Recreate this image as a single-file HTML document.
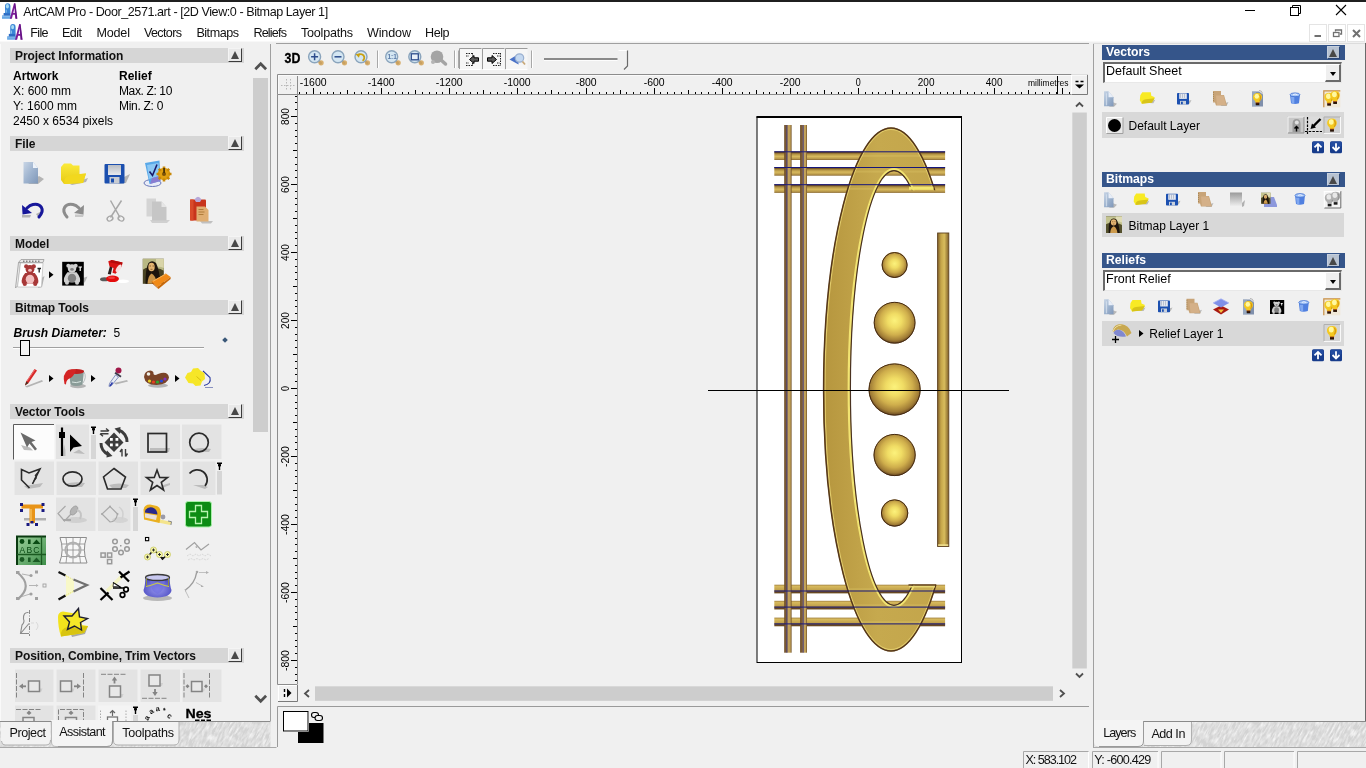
<!DOCTYPE html>
<html><head><meta charset="utf-8"><title>ArtCAM Pro</title>
<style>
*{box-sizing:border-box;margin:0;padding:0}
html,body{width:1366px;height:768px;overflow:hidden;background:#f0f0f0;font-family:"Liberation Sans",sans-serif;font-size:12px;color:#000}
.a{position:absolute}
.t{position:absolute;white-space:nowrap;line-height:1}
#titlebar{left:0;top:0;width:1366px;height:42px;background:#fff;border-bottom:1px solid #f8f8f8}
#topline{left:0;top:0;width:1366px;height:2px;background:#1f1f1f}
.menu{top:27px;font-size:12.6px;color:#111}
.hdr{position:absolute;left:10px;width:234px;height:15px;background:#d6d6d6}
.hdr b{position:absolute;left:5px;top:1.5px;font-size:12px;line-height:13px;letter-spacing:-0.1px;color:#111}
.cbtn{position:absolute;width:14px;height:14px;background:#e9e9e9;border-right:1.5px solid #3c3c3c;border-bottom:1.5px solid #3c3c3c;border-left:1px solid #f4f4f4;border-top:1px solid #f4f4f4}
.cbtn i{position:absolute;left:1.8px;top:2px;width:0;height:0;border-left:4px solid transparent;border-right:4px solid transparent;border-bottom:8px solid #484848}
.bh{position:absolute;left:1102px;width:243px;height:15px;background:#35558a}
.bh b{position:absolute;left:4px;top:1px;font-size:12.2px;line-height:13px;color:#fff}
.bh .cbtn{background:#b7c2d1;border-color:#c6d0de #2a4676 #2a4676 #c6d0de;border-width:1px}
.row{position:absolute;left:1102px;width:242px;height:25px;background:#d8d8d8}
.dd{position:absolute;left:1103px;width:239px;height:21px;background:#fff;border-top:2px solid #6a6a6a;border-left:2px solid #6a6a6a;border-right:1px solid #e8e8e8;border-bottom:1px solid #e8e8e8}
.ddb{position:absolute;right:0px;top:0px;width:16px;height:18px;background:#efefef;border-right:2px solid #6a6a6a;border-bottom:2px solid #6a6a6a;border-left:1px solid #fff;border-top:1px solid #fff}
.ddb i{position:absolute;left:4px;top:7px;width:0;height:0;border-left:3.5px solid transparent;border-right:3.5px solid transparent;border-top:4px solid #000}
#w{position:absolute;left:0;top:0;width:1366px;height:768px;will-change:transform;background:#f0f0f0}
#f1{letter-spacing:-0.449px}#f2{letter-spacing:-0.666px}#f3{letter-spacing:-0.568px}#f4{letter-spacing:-0.178px}#f5{letter-spacing:-0.667px}#f6{letter-spacing:-0.483px}#f7{letter-spacing:-0.817px}#f8{letter-spacing:-0.240px}#f9{letter-spacing:-0.159px}#f10{letter-spacing:-0.469px}#f11{letter-spacing:-0.376px}#f12{letter-spacing:-0.286px}#f13{letter-spacing:-0.451px}#f14{letter-spacing:-0.601px}#f15{letter-spacing:-0.278px}#f16{letter-spacing:-0.963px}#f17{letter-spacing:-0.484px}#f18{letter-spacing:-1.047px}#f19{letter-spacing:-0.742px}</style></head><body><div id="w">
<!-- TITLE + MENU -->
<div class="a" id="titlebar"></div>
<div class="a" id="topline"></div>
<div class="t" id="f1" style="left:23.2px;top:6.3px;font-size:12.6px;color:#111">ArtCAM Pro - Door_2571.art - [2D View:0 - Bitmap Layer 1]</div>
<div class="t menu" id="f2" style="left:30.3px">File</div>
<div class="t menu" id="f3" style="left:62px">Edit</div>
<div class="t menu" id="f4" style="left:96.4px">Model</div>
<div class="t menu" id="f5" style="left:144px">Vectors</div>
<div class="t menu" id="f6" style="left:196.4px">Bitmaps</div>
<div class="t menu" id="f7" style="left:253.4px">Reliefs</div>
<div class="t menu" id="f8" style="left:301px">Toolpaths</div>
<div class="t menu" id="f9" style="left:367px">Window</div>
<div class="t menu" id="f10" style="left:425px">Help</div>
<svg class="a" style="left:0;top:0" width="1366" height="44" viewBox="0 0 1366 44"><g transform="translate(2,3.2)"><rect x="0" y="12.3" width="9" height="3.2" fill="#3f8edc"/><path d="M0 13.3 h9 M0 14.7 h9" stroke="#9ccaf0" stroke-width="0.7"/><rect x="1.6" y="9.8" width="6.8" height="2.6" fill="#2c6cc4"/>
<path d="M3 10 V3 Q3 0 5.7 0 Q8.4 0 8.4 3 V10Z" fill="#3a86d6"/><ellipse cx="5.4" cy="3" rx="1.5" ry="2.2" fill="#a8dcf4"/><path d="M4.2 6.5 v3" stroke="#8cc4ec" stroke-width="1"/>
<path d="M7.8 15.6 L12 0 L13.4 0 L15.4 15.6 L13.2 15.6 L12.9 11.6 L10.9 11.6 L9.9 15.6Z" fill="#7a1c98"/><path d="M11.3 9.8 h1.5 l-0.3 -5.3Z" fill="#fff"/><path d="M12.7 0.5 L14.6 15.6" stroke="#5a0c78" stroke-width="0.8"/></g><g transform="translate(7.2,24.1)"><rect x="0" y="12.3" width="9" height="3.2" fill="#3f8edc"/><path d="M0 13.3 h9 M0 14.7 h9" stroke="#9ccaf0" stroke-width="0.7"/><rect x="1.6" y="9.8" width="6.8" height="2.6" fill="#2c6cc4"/>
<path d="M3 10 V3 Q3 0 5.7 0 Q8.4 0 8.4 3 V10Z" fill="#3a86d6"/><ellipse cx="5.4" cy="3" rx="1.5" ry="2.2" fill="#a8dcf4"/><path d="M4.2 6.5 v3" stroke="#8cc4ec" stroke-width="1"/>
<path d="M7.8 15.6 L12 0 L13.4 0 L15.4 15.6 L13.2 15.6 L12.9 11.6 L10.9 11.6 L9.9 15.6Z" fill="#7a1c98"/><path d="M11.3 9.8 h1.5 l-0.3 -5.3Z" fill="#fff"/><path d="M12.7 0.5 L14.6 15.6" stroke="#5a0c78" stroke-width="0.8"/></g><path d="M1245 10.5 H1255" stroke="#000" stroke-width="1"/><path d="M1292.5 7.5 V5.5 H1300.5 V13.5 H1298.5" fill="none" stroke="#000" stroke-width="1"/><rect x="1290.5" y="7.5" width="8" height="8" fill="#fff" stroke="#000" stroke-width="1"/><path d="M1336 5 L1346 15 M1346 5 L1336 15" stroke="#000" stroke-width="1.1"/><rect x="1309.5" y="24.5" width="17" height="17" fill="#fff" stroke="#e4e4e4" stroke-width="1"/><rect x="1328.5" y="24.5" width="17" height="17" fill="#fff" stroke="#e4e4e4" stroke-width="1"/><rect x="1347.5" y="24.5" width="17" height="17" fill="#fff" stroke="#e4e4e4" stroke-width="1"/><path d="M1314.5 36 H1321" stroke="#707070" stroke-width="2"/><path d="M1335.5 31.5 V30 H1341.5 V34 H1340" fill="none" stroke="#707070" stroke-width="1.3"/><rect x="1333.5" y="32.5" width="5.5" height="4" fill="#fff" stroke="#707070" stroke-width="1.3"/><path d="M1353 30 L1360 37 M1360 30 L1353 37" stroke="#707070" stroke-width="2"/></svg>
<!-- LEFT PANEL -->
<div class="a" id="leftpanel" style="left:0;top:44px;width:270px;height:704px;background:#f0f0f0;overflow:hidden">
<div class="hdr" style="top:4px"><b>Project Information</b><div class="cbtn" style="left:218px;top:0px"><i></i></div></div><div class="hdr" style="top:92px"><b>File</b><div class="cbtn" style="left:218px;top:0px"><i></i></div></div><div class="hdr" style="top:192px"><b>Model</b><div class="cbtn" style="left:218px;top:0px"><i></i></div></div><div class="hdr" style="top:256px"><b>Bitmap Tools</b><div class="cbtn" style="left:218px;top:0px"><i></i></div></div><div class="hdr" style="top:360px"><b>Vector Tools</b><div class="cbtn" style="left:218px;top:0px"><i></i></div></div><div class="hdr" style="top:604px"><b>Position, Combine, Trim Vectors</b><div class="cbtn" style="left:218px;top:0px"><i></i></div></div><div class="t"  style="left:13px;top:25.500000000000004px;"><b>Artwork</b></div><div class="t"  style="left:119px;top:25.500000000000004px;"><b>Relief</b></div><div class="t"  style="left:13px;top:40.5px;">X: 600 mm</div><div class="t" id="f11" style="left:119px;top:40.5px;">Max. Z: 10</div><div class="t"  style="left:13px;top:55.5px;">Y: 1600 mm</div><div class="t" id="f12" style="left:119px;top:55.5px;">Min. Z: 0</div><div class="t"  style="left:13px;top:70.5px;">2450 x 6534 pixels</div><div class="t"  style="left:13.5px;top:282.5px;"><b><i>Brush Diameter:</i></b></div><div class="t"  style="left:113.5px;top:282.5px;">5</div><div class="a" style="left:13px;top:302.5px;width:191px;height:2px;background:#a0a0a0;border-bottom:1px solid #fff"></div><div class="a" style="left:20px;top:296px;width:10px;height:16px;background:#f4f4f4;border:1px solid #000"></div><div class="a" style="left:222.5px;top:293.5px;width:4px;height:4px;background:#3a5878;transform:rotate(45deg)"></div><svg class="a" style="left:0;top:0" width="250" height="677" viewBox="0 44 250 677">
<defs>
<linearGradient id="gDoc" x1="0" y1="0" x2="1" y2="1"><stop offset="0" stop-color="#c9d6e6"/><stop offset="0.5" stop-color="#9fb4cf"/><stop offset="1" stop-color="#7f97b8"/></linearGradient>
<linearGradient id="gFold" x1="0" y1="0" x2="0" y2="1"><stop offset="0" stop-color="#fbea3a"/><stop offset="1" stop-color="#e6c914"/></linearGradient>
<linearGradient id="gGray" x1="0" y1="0" x2="0" y2="1"><stop offset="0" stop-color="#d9d9d9"/><stop offset="1" stop-color="#bdbdbd"/></linearGradient>
<linearGradient id="gSil" x1="0" y1="0" x2="0" y2="1"><stop offset="0" stop-color="#b8bcc2"/><stop offset="1" stop-color="#e8eaee"/></linearGradient>
<radialGradient id="gBowl" cx="0.5" cy="0.6" r="0.6"><stop offset="0" stop-color="#9a9af0"/><stop offset="1" stop-color="#4a4ac0"/></radialGradient>
<linearGradient id="gGreen" x1="0" y1="0" x2="1" y2="1"><stop offset="0" stop-color="#9ccf9c"/><stop offset="1" stop-color="#3f8f4a"/></linearGradient>
<filter id="b1" x="-20%" y="-20%" width="140%" height="140%"><feGaussianBlur stdDeviation="0.6"/></filter>
<filter id="b2" x="-20%" y="-20%" width="140%" height="140%"><feGaussianBlur stdDeviation="1"/></filter>
</defs>
<path d="M39 176 L44 179 L38 184 L28 184Z" fill="#b4b4b4" filter="url(#b1)"/>
<path d="M23.5 162 H33 L38 168 V183.5 H23.5Z" fill="url(#gDoc)"/><path d="M33 162 L33 168 L38 168Z" fill="#eef3fa"/><path d="M70 184 L88 178 L86 182 L72 185Z" fill="#b4b4b4" filter="url(#b1)"/>
<path d="M61 167 L64 163.5 L71 163.5 L73 165.5 L79.5 165.5 L79.5 174 L86 173.5 L83 183 L64 184 L61 180Z" fill="url(#gFold)"/>
<path d="M64 184 Q63 176 72 175 L86 173.5 L83 183Z" fill="#f2d81e"/><path d="M122 178 L130 174 L126 183 L118 184Z" fill="#b4b4b4" filter="url(#b1)"/>
<rect x="104.5" y="164" width="20" height="19.5" rx="1" fill="#1b4faf"/>
<rect x="108" y="165" width="13" height="10" fill="url(#gSil)"/>
<rect x="109.5" y="177" width="10" height="6.5" fill="#c9ccd1"/><rect x="111" y="178.5" width="3" height="4" fill="#1b4faf"/><ellipse cx="152.5" cy="183" rx="8.5" ry="3.5" fill="#e8ecf8" stroke="#6a78b8" stroke-width="1"/>
<path d="M145 163 L159.5 160.5 L160.5 181 L149.5 184Z" fill="#58a8e8"/>
<path d="M147 165 L158.5 163 L159.5 176 L149 179Z" fill="#8cc8f4"/>
<path d="M150 184 L160.5 181 L160 176 L152 178Z" fill="#8a7cd0"/>
<path d="M149.5 171.5 L152.5 175.5 L157 164.5" stroke="#1a1a6a" stroke-width="1.6" fill="none"/>
<circle cx="164" cy="174" r="6.2" fill="#e0a010"/><circle cx="164" cy="174" r="2" fill="#7a5208"/>
<path d="M164 166.5v3M164 178.5v3M156.5 174h3M168.5 174h3M158.8 168.8l2 2M167.2 177.2l2 2M169.2 168.8l-2 2M160.8 177.2l-2 2" stroke="#c88808" stroke-width="2.6"/>
<rect x="163.2" y="168" width="1.8" height="5" fill="#4a3406"/><path d="M22 215 H31 L30 217.5 H22Z M36 214 L44 210 L38 217Z" fill="#b4b4b4"/><path d="M39 217 C46 209 40 203 33 204.5 C30.5 205 28.5 206.5 27 208" stroke="#17179a" stroke-width="3" fill="none" stroke-linecap="round"/>
<path d="M22 205 L22.5 214.5 L32 213Z" fill="#17179a"/><path d="M75 214.5 H84 L83 217 H75Z" fill="#c8c8c8"/>
<path d="M67 217 C60 209 66 203 73 204.5 C75.5 205 77.5 206.5 79 208" stroke="#8c8c8c" stroke-width="3" fill="none" stroke-linecap="round"/>
<path d="M84 205 L83.5 214.5 L74 213Z" fill="#8c8c8c"/><path d="M110.5 200.5 L120 217.5 M121.5 200.5 L110.5 217.5" stroke="#a8a8a8" stroke-width="1.5" fill="none"/>
<ellipse cx="110" cy="218.5" rx="3" ry="2.3" fill="none" stroke="#a8a8a8" stroke-width="1.4" transform="rotate(-30 110 218.5)"/>
<ellipse cx="121" cy="218.5" rx="3" ry="2.3" fill="none" stroke="#a8a8a8" stroke-width="1.4" transform="rotate(30 121 218.5)"/><path d="M150 220 H170 L167 223 H152Z" fill="#d0d0d0" filter="url(#b1)"/>
<path d="M146.5 198.5 H156 V216.5 H146.5Z" fill="#d4d4d4"/>
<path d="M152 201.5 H161.5 L166.5 207 V220.5 H152Z" fill="#c6c6c6"/><path d="M161.5 201.5 V207 H166.5Z" fill="#e6e6e6"/><path d="M200 221 H213 L211 223.5 H202Z" fill="#c0c0c0" filter="url(#b1)"/>
<rect x="190" y="199.5" width="16" height="21" rx="1" fill="#c8341c"/><rect x="190" y="199.5" width="3.5" height="21" fill="#d84a2a"/>
<path d="M194.5 199.5 Q198 194 201.5 199.5 L200 202 H196Z" fill="#b8a8d8"/>
<path d="M196.5 206.5 H205 L208.5 210 V221.5 H196.5Z" fill="#e0ae72"/>
<path d="M198.5 209.5 h5 M198.5 212 h6 M198.5 214.5 h5" stroke="#b07c3a" stroke-width="1"/><path d="M40 279 L44.5 276 L42 287 L38 288Z" fill="#b4b4b4" filter="url(#b1)"/>
<path d="M18.5 262.5 L21 259.5 L44 259.5 L43 262.5Z" fill="#e8e8e8" stroke="#9a9a9a" stroke-width="0.8"/>
<path d="M18.5 262.5 L15.5 288 L18 285.5 L20.5 263Z" fill="#e8e8e8" stroke="#9a9a9a" stroke-width="0.8"/>
<path d="M20.5 263 L43 263 L41.5 287 L17.5 287Z" fill="#fff" stroke="#b0b0b0" stroke-width="0.6"/>
<path d="M23 261.2h1.5M26 261.2h1.5M29 261.2h1.5M32 261.2h1.5M35 261.2h1.5M38 261.2h1.5" stroke="#555" stroke-width="1"/><g transform="translate(30,275) scale(0.95)">
<circle cx="-4" cy="-9" r="2.2" fill="#a83838"/><circle cx="4" cy="-9" r="2.2" fill="#a83838"/>
<circle cx="0" cy="-6" r="4.6" fill="#a83838"/>
<path d="M-5 -2 Q-10 4 -8.5 9 L8.5 9 Q10 4 5 -2Z" fill="#a83838"/>
<ellipse cx="0" cy="4.5" rx="4.5" ry="4.8" fill="#f2c0c0"/>
<circle cx="-5.5" cy="9.5" r="2.2" fill="#a83838"/><circle cx="5.5" cy="9.5" r="2.2" fill="#a83838"/>
<ellipse cx="0" cy="-5" rx="2" ry="1.6" fill="#f2c0c0"/></g><path d="M37.5 268.5 h3.5 M39.2 268.5 v4" stroke="#222" stroke-width="1.3"/><path d="M49 271.2 L53.5 274.7 L49 278.2Z" fill="#000"/><path d="M83 278 L87.5 276.5 L84.5 283Z" fill="#b4b4b4"/>
<rect x="62.2" y="261.8" width="21.6" height="23.8" fill="#000"/><g transform="translate(72,274) scale(0.92)">
<circle cx="-4" cy="-9" r="2.2" fill="#d0d0d0"/><circle cx="4" cy="-9" r="2.2" fill="#d0d0d0"/>
<circle cx="0" cy="-6" r="4.6" fill="#d0d0d0"/>
<path d="M-5 -2 Q-10 4 -8.5 9 L8.5 9 Q10 4 5 -2Z" fill="#d0d0d0"/>
<ellipse cx="0" cy="4.5" rx="4.5" ry="4.8" fill="#808080"/>
<circle cx="-5.5" cy="9.5" r="2.2" fill="#d0d0d0"/><circle cx="5.5" cy="9.5" r="2.2" fill="#d0d0d0"/>
<ellipse cx="0" cy="-5" rx="2" ry="1.6" fill="#808080"/></g><path d="M78.5 267 h3.5 M80.2 267 v4" stroke="#fff" stroke-width="1.2"/><ellipse cx="104.5" cy="279.3" rx="4.5" ry="2" fill="#5a5a5a" filter="url(#b1)"/>
<ellipse cx="123" cy="281.3" rx="6" ry="1.8" fill="#ffffff" filter="url(#b1)"/>
<ellipse cx="112.5" cy="278.8" rx="6.5" ry="3.3" fill="#e40c0c"/><ellipse cx="111.5" cy="277.8" rx="3.5" ry="1.3" fill="#f45050" opacity="0.7"/>
<path d="M107.8 274 L110.5 264 L113 264.5 L110.8 274.5Z" fill="#2a2020"/>
<path d="M108.3 261.3 L111.5 260 L122.5 262.5 L121.8 266.5 L115.5 273.8 L112.5 272.8 L113.5 268 L109.5 266.5Z" fill="#d81414"/>
<path d="M111.5 260 L122.5 262.5 L121.8 264.8 L109.5 262.3Z" fill="#b40c0c"/>
<ellipse cx="118.6" cy="268.3" rx="2" ry="4.3" transform="rotate(34 118.6 268.3)" fill="#f8dede"/><rect x="142.8" y="258.8" width="21" height="25" fill="#4a4424"/>
<path d="M142.8 258.8 h21 v12 q-5 -4 -10 -2 q-6 -3 -11 1Z" fill="#b8b884"/>
<path d="M156 259 h7.8 v9 q-4 -2 -7.8 -1Z" fill="#d8d4a8"/>
<path d="M145.5 283.8 Q145.5 268 148.5 263 Q152 259.5 156 263 Q159.5 270 160.5 283.8Z" fill="#1c140c"/>
<ellipse cx="151.5" cy="267" rx="3.2" ry="4.3" fill="#e2b470"/><path d="M149.5 266 h1.5 M152.5 266 h1.5 M150.5 269.3 h2" stroke="#6a4420" stroke-width="0.7"/>
<path d="M147.5 283.8 Q148 275.5 151.5 273.5 Q155.5 275 157 283.8Z" fill="#c89448"/>
<path d="M151.5 281.5 L165.8 273.4 L170.6 277 L157 287.2Z" fill="#f08a18"/>
<path d="M151.5 281.5 L157 287.2 L158.4 288.9 L152.3 283.5Z" fill="#a85008"/>
<path d="M157 287.2 L170.6 277 L170.6 279 L158.4 288.9Z" fill="#c86808"/>
<path d="M153 281.3 L165.8 274" stroke="#f8b860" stroke-width="0.9"/><path d="M25 386.5 L42 380 L43 381.5 L27 387.5Z" fill="#b4b4b4" filter="url(#b1)"/>
<path d="M25 385.5 L26.2 381.5 L34.5 369 L37 370.5 L28.5 383Z" fill="#d82828"/>
<path d="M25 385.5 L26.2 381.5 L28.5 383Z" fill="#4a3020"/>
<path d="M27 381 L35 369.5" stroke="#f08080" stroke-width="0.8"/><path d="M49 375 L53.5 378.5 L49 382Z" fill="#000"/><ellipse cx="78" cy="386" rx="8" ry="2.2" fill="#b4b4b4" filter="url(#b1)"/>
<path d="M69 372 L84 370.5 L82.5 384.5 Q76 387.5 70.5 384.5Z" fill="#8a9c98"/>
<ellipse cx="76.5" cy="371.5" rx="7.6" ry="2.6" fill="#c02020"/>
<path d="M64.5 384 Q62 374 68 370 Q72 368.5 76 370 Q74 377 68.5 379 Q66 380.5 66 384.5Z" fill="#d42424"/>
<path d="M72 382 Q76 383.5 81 381.5" stroke="#d8e4e0" stroke-width="1" fill="none"/>
<path d="M84 372 Q87 377 83 383" stroke="#b0b8b8" stroke-width="0.9" fill="none"/><path d="M91 375 L95.5 378.5 L91 382Z" fill="#000"/><path d="M114 383 L127 380 L128 381.5 L116 384.5Z" fill="#b4b4b4" filter="url(#b1)"/>
<circle cx="118.5" cy="370.5" r="3" fill="#a01848"/>
<path d="M114.5 373.5 L120.5 377.5 L121.5 376 L115.5 372Z" fill="#3a3a4a"/>
<path d="M115.5 375 L118.5 377 L111.5 385.5 L109 386.5 L109.5 383.5Z" fill="#e8ecf4" stroke="#5868a8" stroke-width="0.7"/>
<path d="M110 386 L112.5 382.5" stroke="#2838a8" stroke-width="1.4"/><ellipse cx="158" cy="385.5" rx="10" ry="2.2" fill="#b4b4b4" filter="url(#b1)"/>
<path d="M144 377 Q144.5 370.5 150.5 370.5 Q154 371 153.5 374 Q154.5 376 158 374 Q168 370.5 169 377.5 Q168.5 384 156.5 385 Q145 385 144 377Z" fill="#7a4428"/>
<circle cx="148.5" cy="374" r="1.8" fill="#f0f0e8"/>
<circle cx="149.5" cy="381" r="1.6" fill="#e8d020"/><circle cx="153.5" cy="382" r="1.6" fill="#e84020"/>
<circle cx="157.5" cy="382" r="1.6" fill="#30a830"/><circle cx="161.5" cy="381" r="1.6" fill="#2848d8"/><circle cx="165" cy="379" r="1.6" fill="#8030c0"/><path d="M175 375 L179.5 378.5 L175 382Z" fill="#000"/><path d="M205 387.5 h8" stroke="#8890c0" stroke-width="1"/>
<path d="M203 371 L210 377.5 Q211.5 384 204 385.5" fill="#f0f0f4" stroke="#2a3aa0" stroke-width="1.1"/>
<path d="M185 377.5 L187.5 373 L191 372 L193 368.5 L198 368 L201 371 L204.5 373 L205 379 L202 381.5 L200.5 385.5 L195.5 386 L193 383.5 L188.5 383Z" fill="#f6e628"/>
<path d="M196.5 376.5 L201 380.5" stroke="#d8c010" stroke-width="1"/><rect x="13.5" y="424.5" width="41" height="35" fill="#fcfcfc"/><path d="M13.5 459.5 V424.5 H54" stroke="#5a5a5a" stroke-width="1" fill="none"/><rect x="56" y="424.5" width="33" height="34.5" fill="#e3e3e3"/><rect x="91" y="435" width="5" height="24" fill="#d6d6d6"/><path d="M91 427.2 h5 M92 429.5 h3 M93.5 427 v7" stroke="#000" stroke-width="1.4" fill="none"/><rect x="92.2" y="427" width="2.6" height="3.2" fill="#000"/><rect x="140" y="424.5" width="40" height="34.5" fill="#e3e3e3"/><rect x="182" y="424.5" width="39.5" height="34.5" fill="#e3e3e3"/><rect x="14.5" y="461.5" width="39.5" height="33.5" fill="#e3e3e3"/><rect x="56.5" y="461.5" width="39.5" height="33.5" fill="#e3e3e3"/><rect x="98.5" y="461.5" width="39.5" height="33.5" fill="#e3e3e3"/><rect x="140.5" y="461.5" width="39.5" height="33.5" fill="#e3e3e3"/><rect x="182.5" y="461.5" width="33" height="33.5" fill="#e3e3e3"/><rect x="217" y="471" width="5" height="23.5" fill="#d6d6d6"/><path d="M217 463.2 h5 M218 465.5 h3 M219.5 463 v7" stroke="#000" stroke-width="1.4" fill="none"/><rect x="218.2" y="463" width="2.6" height="3.2" fill="#000"/><rect x="56" y="497.5" width="39.5" height="33.5" fill="#e3e3e3"/><rect x="98" y="497.5" width="32.5" height="33.5" fill="#e3e3e3"/><rect x="133" y="507" width="5" height="24" fill="#d6d6d6"/><path d="M133 499.2 h5 M134 501.5 h3 M135.5 499 v7" stroke="#000" stroke-width="1.4" fill="none"/><rect x="134.2" y="499" width="2.6" height="3.2" fill="#000"/><path d="M21 445 L30 447.5 L33 450.5 L24 450Z" fill="#bcbcbc" filter="url(#b1)"/>
<path d="M20.5 432.5 L35.5 440.5 L31.5 442 L37 449 L35 450.5 L29.5 443.5 L27 447.5Z" fill="#6a6a6a"/><path d="M64 444 q2 6 1.5 12 h-3Z M73 453 L79 449.5 L85 454Z" fill="#bcbcbc" filter="url(#b1)"/>
<path d="M62 427.5 V456" stroke="#000" stroke-width="2.2"/><rect x="59" y="432" width="6" height="6" fill="#000"/>
<path d="M70 434.5 L82 446 L73.5 447.5 L70 452Z" fill="#000"/><g stroke="#3c3c3c" fill="none"><path d="M118.5 430 A12 12 0 0 1 127 442" stroke-width="3"/><path d="M108.5 454.5 A12 12 0 0 1 101 443" stroke-width="3"/></g>
<path d="M114.5 428.5 L120.5 427 L120 434Z M112.5 456 L106.5 457.5 L107 450.5Z" fill="#3c3c3c"/>
<path d="M114 432.5 L123.5 442.5 L114 452 L104.5 442.5Z" fill="#3c3c3c"/>
<rect x="110" y="438" width="2.8" height="2.8" fill="#fff"/><rect x="115.5" y="438" width="2.8" height="2.8" fill="#fff"/><rect x="110" y="443.5" width="2.8" height="2.8" fill="#fff"/><rect x="115.5" y="443.5" width="2.8" height="2.8" fill="#fff"/>
<path d="M100.5 431 h8 M106 428.5 l3 2.5 M100.5 433.8 h8 M103 436.3 l-3 -2.5" stroke="#3c3c3c" stroke-width="1.4" fill="none"/>
<path d="M122 449 v7.5 M120 452 l2 -3 M125.5 449 v7.5 M127.5 453.5 l-2 3" stroke="#3c3c3c" stroke-width="1.4" fill="none"/><path d="M150 448 h20 l-1 4 h-19Z" fill="#bcbcbc" filter="url(#b1)"/><rect x="148" y="433.5" width="18.5" height="18.5" fill="none" stroke="#2a2a2a" stroke-width="1.7"/><path d="M194 449 q8 -2 17 0 l-2 3 h-12Z" fill="#bcbcbc" filter="url(#b1)"/><circle cx="199" cy="442.5" r="9.3" fill="none" stroke="#2a2a2a" stroke-width="1.7"/><path d="M24 486 L43 483 L40 487 L28 489Z" fill="#bcbcbc" filter="url(#b1)"/>
<path d="M29.5 488 L21.5 480 L21.5 469.5 L29 473 L40 469 L32.5 484" fill="none" stroke="#2a2a2a" stroke-width="1.6"/>
<path d="M40 469 L36 476.5 L34.5 475.5Z M35.5 476 L32 484 L37 478Z" fill="#2a2a2a"/><path d="M65 484 q9 -3 20 -1 l-3 4 h-14Z" fill="#bcbcbc" filter="url(#b1)"/><ellipse cx="72.5" cy="479" rx="9.5" ry="7.2" fill="none" stroke="#2a2a2a" stroke-width="1.7"/><path d="M109 485 q10 -3 20 0 l-3 3 h-14Z" fill="#bcbcbc" filter="url(#b1)"/><path d="M114 468.5 L125.5 477 L121 489 L107.5 489 L103.5 477Z" fill="none" stroke="#2a2a2a" stroke-width="1.6"/><path d="M160 486 l10 -3 v2 l-8 3Z" fill="#bcbcbc" filter="url(#b1)"/><path d="M157 470 L159.7 477.5 L167.5 477.6 L161.3 482.4 L163.6 490 L157 485.5 L150.4 490 L152.7 482.4 L146.5 477.6 L154.3 477.5Z" fill="none" stroke="#2a2a2a" stroke-width="1.6"/><path d="M193 485 h10 l5 2 -3 2Z" fill="#bcbcbc" filter="url(#b1)"/><path d="M189.5 473.5 A9 9 0 1 1 205 486" fill="none" stroke="#2a2a2a" stroke-width="1.7"/><rect x="24" y="518" width="22" height="2.5" fill="#b0b0b0"/>
<path d="M21.5 504.5 H43 V508.5 H35 V523 H29.5 V508.5 H21.5Z" fill="#e89418"/><path d="M31 509 V522" stroke="#f8c868" stroke-width="1.2"/>
<g fill="#1a1a80"><rect x="20" y="503" width="3" height="3"/><rect x="41.5" y="503" width="3" height="3"/><rect x="20" y="509" width="3" height="3"/><rect x="41.5" y="509" width="3" height="3"/><rect x="26.5" y="523" width="3" height="3"/><rect x="35" y="523" width="3" height="3"/><rect x="30.5" y="521" width="3" height="2.5"/></g><ellipse cx="76" cy="520" rx="11" ry="3" fill="#d0d0d0" filter="url(#b1)"/>
<path d="M65.5 506 L58 513.5 L64.5 521 L72 513" fill="none" stroke="#a8a8a8" stroke-width="1.2"/>
<ellipse cx="74" cy="510.5" rx="3" ry="5" transform="rotate(35 74 510.5)" fill="#b4b4b4" stroke="#9a9a9a" stroke-width="0.8"/>
<path d="M77 510 q6 2 3 9" fill="none" stroke="#c4c4c4" stroke-width="2"/><path d="M63 520 h8" stroke="#a8a8a8" stroke-width="2"/><ellipse cx="120" cy="520" rx="8" ry="3" fill="#d4d4d4" filter="url(#b1)"/>
<path d="M110 506.5 L102 514 L110 522 Q116 522 117.5 514Z" fill="none" stroke="#a8a8a8" stroke-width="1.2"/>
<circle cx="110" cy="506.5" r="1" fill="#a8a8a8"/><circle cx="102" cy="514" r="1" fill="#a8a8a8"/><circle cx="117.5" cy="514" r="1" fill="#a8a8a8"/>
<path d="M119 507 q6 4 3 12" fill="none" stroke="#d0d0d0" stroke-width="1.5"/><path d="M160 519.5 L172 522 L170 525 L158 522.5Z" fill="#f4e48c"/><path d="M168 521 l3.5 0.7 -0.6 3.3" stroke="#888" stroke-width="1" fill="none"/>
<path d="M143.5 510 Q144 504.5 150 504.5 L157 506 Q161.5 508 161 515 L159.5 523 L144 519.5Z" fill="#eab020"/>
<path d="M145 511 Q147 506.5 152.5 507.5 Q157 509 157.5 514.5 L145 512.5Z" fill="#28288c"/>
<path d="M145 513.5 L157 515.5 L156 520 L145 517.5Z" fill="#e8e0dc"/>
<circle cx="163" cy="517" r="2.4" fill="#9a9aa8"/><rect x="185.5" y="501.5" width="26" height="25.5" rx="2.5" fill="#0c8c14" stroke="#a8f0a8" stroke-width="1"/>
<path d="M195.5 505.5 h6 v6 h6 v6 h-6 v6 h-6 v-6 h-6 v-6 h6Z" fill="#0c8c14" stroke="#b8f4b0" stroke-width="1.3"/><rect x="17" y="536.5" width="29" height="28.5" fill="url(#gGreen)"/><path d="M17 565 V536.5 H46" stroke="#0a3a10" stroke-width="2" fill="none"/>
<path d="M17 554.5 H46 M41.5 536.5 V565" stroke="#1a5a20" stroke-width="1.3"/>
<circle cx="22" cy="541.5" r="2.4" fill="#0a4a14"/><rect x="28" y="539.5" width="2.6" height="4.5" fill="#0a4a14"/><path d="M32.5 544 L36.5 539.5 L40.5 544Z" fill="#0a4a14"/>
<circle cx="22" cy="559.5" r="2.4" fill="#1a5a24"/><rect x="28" y="557.5" width="2.6" height="4.5" fill="#1a5a24"/><path d="M32.5 562 L36.5 557.5 L40.5 562Z" fill="#1a5a24"/>
<text x="19.5" y="552.5" font-family="Liberation Sans" font-size="8.5" fill="#0a4a14" textLength="20">ABC</text><path d="M60 537.5 H86.5 Q82 550 87 563 H59.5 Q64.5 550 60 537.5Z" fill="#f8f8f8" stroke="#8c8c8c" stroke-width="1"/>
<path d="M66 537.5 Q69 550 66 563 M73 537.5 V563 M80.5 537.5 Q77.5 550 80.5 563 M61.5 544 H85 M62.5 550 H84 M61.5 556.5 H85" stroke="#8c8c8c" stroke-width="0.8" fill="none"/>
<circle cx="73" cy="550" r="7.5" fill="none" stroke="#b0b0b0" stroke-width="2.2"/><rect x="101" y="553" width="4.2" height="4.2" fill="none" stroke="#9a9a9a" stroke-width="1.5"/><rect x="107.5" y="553" width="4.2" height="4.2" fill="none" stroke="#9a9a9a" stroke-width="1.5"/><rect x="107.5" y="559.5" width="4.2" height="4.2" fill="none" stroke="#9a9a9a" stroke-width="1.5"/><circle cx="115" cy="541.5" r="2.3" fill="none" stroke="#9a9a9a" stroke-width="1.5"/><circle cx="127" cy="541.5" r="2.3" fill="none" stroke="#9a9a9a" stroke-width="1.5"/><circle cx="115" cy="549" r="2.3" fill="none" stroke="#9a9a9a" stroke-width="1.5"/><circle cx="127" cy="549" r="2.3" fill="none" stroke="#9a9a9a" stroke-width="1.5"/><circle cx="121" cy="552.5" r="2.3" fill="none" stroke="#9a9a9a" stroke-width="1.5"/><rect x="120" y="545" width="1.5" height="1.5" fill="#9a9a9a"/><rect x="145.5" y="537.5" width="3.2" height="3.2" fill="#fff" stroke="#000" stroke-width="1.1"/>
<path d="M147.5 557 L153.5 550 L159.5 554.5 L162.5 559 L167.5 554.5" fill="none" stroke="#1a1a1a" stroke-width="1.6"/>
<g fill="#f8f8b0" stroke="#c8c860" stroke-width="0.8"><circle cx="147.5" cy="557" r="3"/><circle cx="153.5" cy="550" r="3"/><circle cx="159.5" cy="554.5" r="3"/><circle cx="167.5" cy="554.5" r="3"/></g>
<path d="M146 557h3M147.5 555.5v3M152 550h3M153.5 548.5v3M158 554.5h3M159.5 553v3M166 554.5h3M167.5 553v3" stroke="#222" stroke-width="0.9"/>
<path d="M160 557 L162.5 560 L165 557Z" fill="#1a1a1a"/><path d="M186 549.5 L194.5 542.5 L201 550 L209 544" fill="none" stroke="#a0a0a0" stroke-width="1.2"/><path d="M196.5 544 v4 l-1 -1.5 m1 1.5 l1 -1.5" stroke="#b0b0b0" stroke-width="0.8" fill="none"/>
<path d="M187 556 l3 -2 3 2 3 -2 3 2 3 -2 3 2 3 -2 3 2 M188 560 l3 -1.5 3 1.5 3 -1.5 3 1.5 3 -1.5 3 1.5 3 -1.5" stroke="#d8d8d8" stroke-width="1" fill="none" stroke-dasharray="2 1"/><path d="M17.5 572.5 Q34 586 17.5 599.5" fill="none" stroke="#a0a0a0" stroke-width="2.2"/>
<rect x="16" y="571" width="3.5" height="3" fill="#a0a0a0"/><rect x="16" y="597" width="3.5" height="3" fill="#a0a0a0"/>
<path d="M22 574 l8 1.5 M22 596.5 l8 -2.5 M29 585.5 h9" stroke="#b4b4b4" stroke-width="1"/><path d="M36 584 l2.5 1.5 -2.5 1.5Z" fill="#b4b4b4"/>
<circle cx="31" cy="575.5" r="1.6" fill="#a0a0a0"/><circle cx="31" cy="594" r="1.6" fill="#a0a0a0"/>
<rect x="35" y="570.5" width="3" height="3" fill="#a0a0a0"/><rect x="35" y="597" width="3" height="3" fill="#a0a0a0"/><rect x="43" y="584" width="3" height="3" fill="none" stroke="#a0a0a0" stroke-width="0.9"/><path d="M66 575 L74 580.5 L74 592 L66 597" fill="#f8f8c8" stroke="none"/>
<path d="M58.5 572 L65.5 575.5 M58.5 599.5 L65.5 595.5" stroke="#111" stroke-width="2.2"/>
<path d="M73.5 579.5 L87 585 L73.5 591.5" fill="none" stroke="#707070" stroke-width="2.2"/>
<path d="M65.5 575.5 L73 579.5 M65.5 595.5 L73 591.5" stroke="#e0e070" stroke-width="0.8" stroke-dasharray="1.5 1"/><path d="M107 591 L123 575" stroke="#f4f4c4" stroke-width="3.5"/>
<path d="M119 571.5 L129 581.5 M120.5 577.5 L129.5 571.5" stroke="#000" stroke-width="2.2"/>
<path d="M100.5 588 L112.5 600 M100.5 600 L108.5 592.5" stroke="#000" stroke-width="2.2"/>
<path d="M113 582.5 L121 587.5 M113 588 H124" stroke="#000" stroke-width="1.3"/><path d="M113.5 583 l5 3.2 -5.5 0.5Z" fill="#fff" stroke="#000" stroke-width="0.7"/>
<circle cx="126" cy="589.5" r="2.3" fill="#fff" stroke="#000" stroke-width="1.7"/><circle cx="122.5" cy="595" r="2.3" fill="#fff" stroke="#000" stroke-width="1.7"/><ellipse cx="157.5" cy="598" rx="14.5" ry="3" fill="#b8b8b8" filter="url(#b1)"/>
<path d="M145.5 577 Q145 587 143.5 590 Q144 597 157.5 597.5 Q171 597 171.5 590 Q170 587 169.5 577Z" fill="url(#gBowl)"/>
<path d="M150 580 Q157.5 574 165 580 Q164 592 157.5 594 Q151 592 150 580Z" fill="#7070e0" opacity="0.7"/>
<ellipse cx="157.5" cy="577.5" rx="12" ry="3" fill="#c8c8f0" stroke="#3a3a3a" stroke-width="1.3"/>
<path d="M146 586.5 Q151 585.5 157.5 583 Q164 585.5 169 586.5" fill="none" stroke="#c8c848" stroke-width="1.2"/><path d="M146.5 578 v8 M168.5 578 v8" stroke="#8a8a4a" stroke-width="1"/><path d="M196.5 573 Q195 583 185.5 590" fill="none" stroke="#9c9c9c" stroke-width="1.4"/><circle cx="197" cy="572" r="1.3" fill="#a8a8a8"/>
<path d="M199 572.5 h9 M196 582.5 l7 4 M185.5 591 l3.5 7" stroke="#c0c0c0" stroke-width="1"/><path d="M206 571 l3 1.5 -3 1.5Z M184.5 589 l2 0 -1 3Z M201 585 l3 2 -3 0Z" fill="#b0b0b0"/><path d="M29.5 610 V636" stroke="#8a8a8a" stroke-width="1" stroke-dasharray="4 1.5 1 1.5"/>
<path d="M28.5 612.5 Q23 612 23.5 619 Q25 622 22 625 L20.5 633.5 H29 M21 633 L29 623.5" fill="none" stroke="#8a8a8a" stroke-width="1.1"/>
<path d="M36 622 q4 4 0 8 M31 623 h3" fill="none" stroke="#dadada" stroke-width="1"/><path d="M70 632 L88 626 L85 634 L72 637Z" fill="#a8a8a8" filter="url(#b1)"/>
<path d="M58 617 Q58 612 63 611.5 L72 613 L80 615 L82 625 L88 626 L84 633 L61 636.5 Q58 628 58 617Z" fill="#f2e21c"/>
<path d="M61 636.5 Q60 628 68 627 L88 626 L84 633Z" fill="#d8c410"/>
<path d="M78.5 608.5 L79.5 617 L87.5 618.5 L80.5 622.5 L81.5 630 L74.5 626 L67.5 629.5 L69.5 622 L64 616 L72 616Z" fill="#f6e828" stroke="#1e1e30" stroke-width="1.4" stroke-linejoin="miter"/><rect x="15" y="669.5" width="38.5" height="32.5" fill="#e3e3e3"/><rect x="56.5" y="669.5" width="39" height="32.5" fill="#e3e3e3"/><rect x="98.5" y="669.5" width="39" height="32.5" fill="#e3e3e3"/><rect x="140.5" y="669.5" width="39.5" height="32.5" fill="#e3e3e3"/><rect x="182.5" y="669.5" width="39" height="32.5" fill="#e3e3e3"/><rect x="15" y="705.5" width="38.5" height="20" fill="#e3e3e3"/><rect x="56.5" y="705.5" width="39" height="20" fill="#e3e3e3"/><rect x="98" y="705.5" width="33" height="20" fill="#f4f4f4"/><rect x="133" y="715" width="5" height="11" fill="#d6d6d6"/><path d="M133 707.2 h5 M134 709.5 h3 M135.5 707 v7" stroke="#000" stroke-width="1.4" fill="none"/><rect x="134.2" y="707" width="2.6" height="3.2" fill="#000"/><path d="M16.5 673 V699" stroke="#848484" stroke-width="1" stroke-dasharray="5 1.5"/><path d="M26 686.3 h-4" stroke="#848484" stroke-width="1.8"/><path d="M19 686.3 l4 -2.7 v5.4Z" fill="#848484"/><path d="M31.5 688.5 h11 l-1 3 h-9Z" fill="#cfcfcf"/><rect x="28.5" y="681" width="11" height="10.5" fill="#e8e8e8" stroke="#848484" stroke-width="1.5"/><path d="M63.5 688.5 h11 l-1 3 h-9Z" fill="#cfcfcf"/><rect x="60.5" y="681" width="11" height="10.5" fill="#e8e8e8" stroke="#848484" stroke-width="1.5"/><path d="M74 686.3 h4" stroke="#848484" stroke-width="1.8"/><path d="M81 686.3 l-4 -2.7 v5.4Z" fill="#848484"/><path d="M83.5 673 V699" stroke="#848484" stroke-width="1" stroke-dasharray="5 1.5"/><path d="M101 674.3 H127" stroke="#848484" stroke-width="1" stroke-dasharray="5 1.5"/><path d="M114.5 683.5 v-4" stroke="#848484" stroke-width="1.8"/><path d="M114.5 676.5 l-2.7 4 h5.4Z" fill="#848484"/><path d="M112.5 694 h11 l-1 3 h-9Z" fill="#cfcfcf"/><rect x="109.5" y="686" width="11" height="11" fill="#e8e8e8" stroke="#848484" stroke-width="1.5"/><path d="M152 683 h11 l-1 3 h-9Z" fill="#cfcfcf"/><rect x="149" y="675" width="11" height="11" fill="#e8e8e8" stroke="#848484" stroke-width="1.5"/><path d="M155 689 v4" stroke="#848484" stroke-width="1.8"/><path d="M155 696 l-2.7 -4 h5.4Z" fill="#848484"/><path d="M142 698.3 H168" stroke="#848484" stroke-width="1" stroke-dasharray="5 1.5"/><path d="M184 673 V699" stroke="#848484" stroke-width="1" stroke-dasharray="5 1.5"/><path d="M209.5 673 V699" stroke="#848484" stroke-width="1" stroke-dasharray="5 1.5"/><path d="M194.5 688.5 h10.5 l-1 3 h-8.5Z" fill="#cfcfcf"/><rect x="191.5" y="681.5" width="10.5" height="10" fill="#e8e8e8" stroke="#848484" stroke-width="1.5"/><path d="M185.5 686.3 l2 -2 2 2 -2 2Z M204 686.3 l2 -2 2 2 -2 2Z" fill="#848484"/><path d="M16 709.5 H42" stroke="#848484" stroke-width="1" stroke-dasharray="5 1.5"/><path d="M26.5 713 l2.5 -2.5 2.5 2.5 -2.5 2Z" fill="#848484"/><rect x="23" y="717.5" width="11" height="8" fill="#e8e8e8" stroke="#848484" stroke-width="1.5"/><path d="M58.5 721 V709.5 H83.5 V721" fill="none" stroke="#848484" stroke-width="1" stroke-dasharray="5 1.5"/><path d="M68.5 713 l2.5 -2.5 2.5 2.5 -2.5 2Z" fill="#848484"/><rect x="65.5" y="717.5" width="11" height="8" fill="#e8e8e8" stroke="#848484" stroke-width="1.5"/><path d="M100.5 721 V709.5 M126 721 V709.5" stroke="#aaa" stroke-width="1" stroke-dasharray="1.5 1.5"/><path d="M112.5 716 v-5 M110 713 l2.5 -2.5 2.5 2.5" stroke="#666" stroke-width="1.2" fill="none"/><rect x="107.5" y="717" width="10" height="8" fill="#f8f8f8" stroke="#777" stroke-width="1.3"/><text transform="translate(148,721) rotate(-60)" font-family="Liberation Sans" font-size="7.5" font-weight="bold" fill="#111">a</text><text transform="translate(151,714.5) rotate(-35)" font-family="Liberation Sans" font-size="7.5" font-weight="bold" fill="#111">a</text><text transform="translate(156,711.5) rotate(-10)" font-family="Liberation Sans" font-size="7.5" font-weight="bold" fill="#111">a</text><text transform="translate(162,712.5) rotate(15)" font-family="Liberation Sans" font-size="7.5" font-weight="bold" fill="#111">*</text><text transform="translate(166.5,716.5) rotate(40)" font-family="Liberation Sans" font-size="7.5" font-weight="bold" fill="#111">c</text><text x="185.5" y="718" font-family="Liberation Sans" font-size="13" font-weight="bold" fill="#000" stroke="#000" stroke-width="0.3" textLength="26" lengthAdjust="spacingAndGlyphs">Nes</text><path d="M195 720.3 h4.5 M201 720.3 h4 M206.5 720.3 h4.5" stroke="#000" stroke-width="1.8"/></svg><div class="a" style="left:251px;top:12px;width:18px;height:664px;background:#f0f0f0"></div><div class="a" style="left:252.5px;top:34px;width:15.5px;height:354px;background:#cdcdcd"></div><svg class="a" style="left:251px;top:12px" width="18" height="664"><path d="M4.3 13.3 L9.7 7.8 L15.1 13.3" fill="none" stroke="#505050" stroke-width="2.7"/><path d="M4.3 639.7 L9.7 645.2 L15.1 639.7" fill="none" stroke="#505050" stroke-width="2.7"/></svg>
</div>
<!-- CENTER -->
<div class="a" id="center" style="left:276px;top:43px;width:813px;height:705px;background:#f0f0f0;overflow:hidden">
<div class="a" style="left:0;top:0;width:814.5px;height:1px;background:#a0a0a0"></div><svg class="a" style="left:0;top:0" width="813" height="705" viewBox="276 43 813 705"><text x="284.6" y="62.7" font-family="Liberation Sans" font-size="14.6" font-weight="bold" fill="#000" stroke="#000" stroke-width="0.3" textLength="15.8" lengthAdjust="spacingAndGlyphs">3D</text><circle cx="321.1" cy="62.8" r="2.6" fill="#d8b070"/><path d="M318.6 60.8 l3 3" stroke="#c8a060" stroke-width="2.5"/><circle cx="314.6" cy="56.8" r="6" fill="#d4e6f2" stroke="#8aa4bc" stroke-width="1.4"/><path d="M311.1 56.8 h7 M314.6 53.3 v7" stroke="#2c4c8c" stroke-width="1.5"/><circle cx="344.5" cy="62.8" r="2.6" fill="#d8b070"/><path d="M342 60.8 l3 3" stroke="#c8a060" stroke-width="2.5"/><circle cx="338" cy="56.8" r="6" fill="#d4e6f2" stroke="#8aa4bc" stroke-width="1.4"/><path d="M334.5 56.8 h7" stroke="#2c4c8c" stroke-width="1.5"/><circle cx="367.5" cy="62.8" r="2.6" fill="#d8b070"/><path d="M365 60.8 l3 3" stroke="#c8a060" stroke-width="2.5"/><circle cx="361" cy="56.8" r="6" fill="#d4e6f2" stroke="#8aa4bc" stroke-width="1.4"/><path d="M362.5 60.8 A3.6 3.6 0 1 0 358 55.3" fill="none" stroke="#c8a010" stroke-width="1.8"/><path d="M355.5 54.3 l4.5 -1 -1 4.5Z" fill="#c8a010"/><path d="M377.5 50.5 V68" stroke="#a8a8a8" stroke-width="1"/><path d="M378.5 50.5 V68" stroke="#fff" stroke-width="1"/><circle cx="398.2" cy="62.8" r="2.6" fill="#d8b070"/><path d="M395.7 60.8 l3 3" stroke="#c8a060" stroke-width="2.5"/><circle cx="391.7" cy="56.8" r="6" fill="#d4e6f2" stroke="#8aa4bc" stroke-width="1.4"/><text x="387.4" y="59.099999999999994" font-family="Liberation Sans" font-size="6.5" font-weight="bold" fill="#5a7aa8">1:1</text><circle cx="421.3" cy="62.8" r="2.6" fill="#d8b070"/><path d="M418.8 60.8 l3 3" stroke="#c8a060" stroke-width="2.5"/><circle cx="414.8" cy="56.8" r="6" fill="#d4e6f2" stroke="#8aa4bc" stroke-width="1.4"/><rect x="411.3" y="53.8" width="7" height="6" fill="#e8f0f8" stroke="#2c4c8c" stroke-width="1.3"/><circle cx="437" cy="56.8" r="6.3" fill="#a4a4a4"/><path d="M441 60 l4.5 4" stroke="#a4a4a4" stroke-width="3.5" stroke-linecap="round"/><circle cx="433" cy="62" r="2" fill="#b4b4b4"/><path d="M458.5 50.5 V68" stroke="#a8a8a8"/><path d="M459.5 50.5 V68" stroke="#fff"/><path d="M461.5 50.5 V68" stroke="#a8a8a8"/><path d="M462.5 50.5 V68" stroke="#fff"/><path d="M454.5 50.5 V68" stroke="#a8a8a8"/><path d="M455.5 50.5 V68" stroke="#fff"/><rect x="459" y="48" width="22.5" height="21" fill="#f6f6f6"/><path d="M459.5 69 V48.5 H481.5" fill="none" stroke="#9c9c9c"/><path d="M460 69.5 H481.5" stroke="#fff"/><rect x="482" y="48" width="22.5" height="21" fill="#f6f6f6"/><path d="M482.5 69 V48.5 H504.5" fill="none" stroke="#9c9c9c"/><path d="M483 69.5 H504.5" stroke="#fff"/><rect x="505" y="48" width="22.5" height="21" fill="#f6f6f6"/><path d="M505.5 69 V48.5 H527.5" fill="none" stroke="#9c9c9c"/><path d="M506 69.5 H527.5" stroke="#fff"/><path d="M466 53.5 h7 M466 56 h3 M466 63 h3 M466 65.5 h7 M472.5 53 v3 M472.5 63 v3" stroke="#222" stroke-width="1" stroke-dasharray="1.5 1"/><path d="M469.5 59.5 L474 55.5 V57.8 H478.5 V61.2 H474 V63.5Z" fill="#5a5a5a" stroke="#000" stroke-width="1"/><path d="M493 53.5 h7 M497 56 h3 M497 63 h3 M493 65.5 h7 M500.5 53 v13" stroke="#222" stroke-width="1" stroke-dasharray="1.5 1"/><path d="M496.5 59.5 L492 55.5 V57.8 H487.5 V61.2 H492 V63.5Z" fill="#5a5a5a" stroke="#000" stroke-width="1"/><path d="M509.5 59.5 L518.5 54 V64.5Z" fill="#4a72c8"/><circle cx="519.5" cy="58" r="4.2" fill="#c4d8f0" stroke="#9ab0d0" stroke-width="1.2"/><path d="M522.5 61.5 l2.5 3" stroke="#c8a878" stroke-width="1.8"/><path d="M531.5 50.5 V68" stroke="#a8a8a8"/><path d="M532.5 50.5 V68" stroke="#fff"/><rect x="544" y="58" width="73.5" height="2" fill="#8a8a8a"/><rect x="544" y="60" width="73.5" height="1" fill="#fdfdfd"/><path d="M618.5 50.5 H627.5 V66 L624.5 69.5 L618.5 69.5Z" fill="#f0f0f0"/><path d="M618.5 50.5 H627" stroke="#fff"/><path d="M627.5 50.5 V66 L624 69.5" fill="none" stroke="#6a6a6a" stroke-width="1.2"/><path d="M277.5 94.5 V74.5 H1087.5" fill="none" stroke="#8c8c8c"/><path d="M277.5 94.5 H1071" stroke="#8c8c8c"/><path d="M297.5 74.5 V684" stroke="#8c8c8c"/><path d="M277.5 94.5 V684.5" stroke="#8c8c8c"/><path d="M278 75.5 H1071 M278.5 75 V94" stroke="#fafafa"/><path d="M277.5 684.5 H297.5" stroke="#8c8c8c"/><path d="M281 85.5 H295 M286.5 79 V91 M290.5 79 V91" stroke="#b8b8b8" stroke-dasharray="1.5 1.5"/><path d="M299.5 92 V94 M306.5 92 V94 M313.5 88 V94 M320.5 92 V94 M327.5 92 V94 M333.5 92 V94 M340.5 92 V94 M347.5 90 V94 M354.5 92 V94 M361.5 92 V94 M368.5 92 V94 M374.5 92 V94 M381.5 88 V94 M388.5 92 V94 M395.5 92 V94 M402.5 92 V94 M408.5 92 V94 M415.5 90 V94 M422.5 92 V94 M429.5 92 V94 M436.5 92 V94 M442.5 92 V94 M449.5 88 V94 M456.5 92 V94 M463.5 92 V94 M470.5 92 V94 M477.5 92 V94 M483.5 90 V94 M490.5 92 V94 M497.5 92 V94 M504.5 92 V94 M511.5 92 V94 M517.5 88 V94 M524.5 92 V94 M531.5 92 V94 M538.5 92 V94 M545.5 92 V94 M551.5 90 V94 M558.5 92 V94 M565.5 92 V94 M572.5 92 V94 M579.5 92 V94 M586.5 88 V94 M592.5 92 V94 M599.5 92 V94 M606.5 92 V94 M613.5 92 V94 M620.5 90 V94 M626.5 92 V94 M633.5 92 V94 M640.5 92 V94 M647.5 92 V94 M654.5 88 V94 M660.5 92 V94 M667.5 92 V94 M674.5 92 V94 M681.5 92 V94 M688.5 90 V94 M695.5 92 V94 M701.5 92 V94 M708.5 92 V94 M715.5 92 V94 M722.5 88 V94 M729.5 92 V94 M735.5 92 V94 M742.5 92 V94 M749.5 92 V94 M756.5 90 V94 M763.5 92 V94 M769.5 92 V94 M776.5 92 V94 M783.5 92 V94 M790.5 88 V94 M797.5 92 V94 M804.5 92 V94 M810.5 92 V94 M817.5 92 V94 M824.5 90 V94 M831.5 92 V94 M838.5 92 V94 M844.5 92 V94 M851.5 92 V94 M858.5 88 V94 M865.5 92 V94 M872.5 92 V94 M878.5 92 V94 M885.5 92 V94 M892.5 90 V94 M899.5 92 V94 M906.5 92 V94 M912.5 92 V94 M919.5 92 V94 M926.5 88 V94 M933.5 92 V94 M940.5 92 V94 M947.5 92 V94 M953.5 92 V94 M960.5 90 V94 M967.5 92 V94 M974.5 92 V94 M981.5 92 V94 M987.5 92 V94 M994.5 88 V94 M1001.5 92 V94 M1008.5 92 V94 M1015.5 92 V94 M1021.5 92 V94 M1028.5 90 V94 M1035.5 92 V94 M1042.5 92 V94 M1049.5 92 V94 M1056.5 92 V94 M1062.5 88 V94 M1069.5 92 V94 " stroke="#000" stroke-width="1" shape-rendering="crispEdges"/><text x="299.8" y="86" font-family="Liberation Sans" font-size="11.5" fill="#000" textLength="26.8" lengthAdjust="spacingAndGlyphs">-1600</text><text x="367.8" y="86" font-family="Liberation Sans" font-size="11.5" fill="#000" textLength="26.8" lengthAdjust="spacingAndGlyphs">-1400</text><text x="435.8" y="86" font-family="Liberation Sans" font-size="11.5" fill="#000" textLength="26.8" lengthAdjust="spacingAndGlyphs">-1200</text><text x="503.8" y="86" font-family="Liberation Sans" font-size="11.5" fill="#000" textLength="26.8" lengthAdjust="spacingAndGlyphs">-1000</text><text x="575.7" y="86" font-family="Liberation Sans" font-size="11.5" fill="#000" textLength="20.9" lengthAdjust="spacingAndGlyphs">-800</text><text x="643.7" y="86" font-family="Liberation Sans" font-size="11.5" fill="#000" textLength="20.9" lengthAdjust="spacingAndGlyphs">-600</text><text x="711.7" y="86" font-family="Liberation Sans" font-size="11.5" fill="#000" textLength="20.9" lengthAdjust="spacingAndGlyphs">-400</text><text x="779.7" y="86" font-family="Liberation Sans" font-size="11.5" fill="#000" textLength="20.9" lengthAdjust="spacingAndGlyphs">-200</text><text x="855.7" y="86" font-family="Liberation Sans" font-size="11.5" fill="#000" textLength="5" lengthAdjust="spacingAndGlyphs">0</text><text x="917.8" y="86" font-family="Liberation Sans" font-size="11.5" fill="#000" textLength="16.7" lengthAdjust="spacingAndGlyphs">200</text><text x="985.8" y="86" font-family="Liberation Sans" font-size="11.5" fill="#000" textLength="16.7" lengthAdjust="spacingAndGlyphs">400</text><text x="1028" y="85.5" font-family="Liberation Sans" font-size="9.4" fill="#000" textLength="40.5" lengthAdjust="spacingAndGlyphs">millimetres</text><path d="M1057.5 76 V94" stroke="#000"/><path d="M295 680.5 H297 M295 674.5 H297 M295 667.5 H297 M291 660.5 H297 M295 653.5 H297 M295 646.5 H297 M295 640.5 H297 M295 633.5 H297 M293 626.5 H297 M295 619.5 H297 M295 612.5 H297 M295 606.5 H297 M295 599.5 H297 M291 592.5 H297 M295 585.5 H297 M295 578.5 H297 M295 572.5 H297 M295 565.5 H297 M293 558.5 H297 M295 551.5 H297 M295 544.5 H297 M295 538.5 H297 M295 531.5 H297 M291 524.5 H297 M295 517.5 H297 M295 510.5 H297 M295 504.5 H297 M295 497.5 H297 M293 490.5 H297 M295 483.5 H297 M295 476.5 H297 M295 470.5 H297 M295 463.5 H297 M291 456.5 H297 M295 449.5 H297 M295 442.5 H297 M295 436.5 H297 M295 429.5 H297 M293 422.5 H297 M295 415.5 H297 M295 408.5 H297 M295 402.5 H297 M295 395.5 H297 M291 388.5 H297 M295 381.5 H297 M295 374.5 H297 M295 368.5 H297 M295 361.5 H297 M293 354.5 H297 M295 347.5 H297 M295 340.5 H297 M295 334.5 H297 M295 327.5 H297 M291 320.5 H297 M295 313.5 H297 M295 306.5 H297 M295 300.5 H297 M295 293.5 H297 M293 286.5 H297 M295 279.5 H297 M295 272.5 H297 M295 266.5 H297 M295 259.5 H297 M291 252.5 H297 M295 245.5 H297 M295 238.5 H297 M295 232.5 H297 M295 225.5 H297 M293 218.5 H297 M295 211.5 H297 M295 204.5 H297 M295 198.5 H297 M295 191.5 H297 M291 184.5 H297 M295 177.5 H297 M295 170.5 H297 M295 164.5 H297 M295 157.5 H297 M293 150.5 H297 M295 143.5 H297 M295 136.5 H297 M295 130.5 H297 M295 123.5 H297 M291 116.5 H297 M295 109.5 H297 M295 102.5 H297 M295 96.5 H297 " stroke="#000" stroke-width="1" shape-rendering="crispEdges"/><text transform="translate(289.2,671) rotate(-90)" font-family="Liberation Sans" font-size="11.5" fill="#000" textLength="20.9" lengthAdjust="spacingAndGlyphs">-800</text><text transform="translate(289.2,603) rotate(-90)" font-family="Liberation Sans" font-size="11.5" fill="#000" textLength="20.9" lengthAdjust="spacingAndGlyphs">-600</text><text transform="translate(289.2,535) rotate(-90)" font-family="Liberation Sans" font-size="11.5" fill="#000" textLength="20.9" lengthAdjust="spacingAndGlyphs">-400</text><text transform="translate(289.2,467) rotate(-90)" font-family="Liberation Sans" font-size="11.5" fill="#000" textLength="20.9" lengthAdjust="spacingAndGlyphs">-200</text><text transform="translate(289.2,391) rotate(-90)" font-family="Liberation Sans" font-size="11.5" fill="#000" textLength="5" lengthAdjust="spacingAndGlyphs">0</text><text transform="translate(289.2,328.9) rotate(-90)" font-family="Liberation Sans" font-size="11.5" fill="#000" textLength="16.7" lengthAdjust="spacingAndGlyphs">200</text><text transform="translate(289.2,260.9) rotate(-90)" font-family="Liberation Sans" font-size="11.5" fill="#000" textLength="16.7" lengthAdjust="spacingAndGlyphs">400</text><text transform="translate(289.2,192.9) rotate(-90)" font-family="Liberation Sans" font-size="11.5" fill="#000" textLength="16.7" lengthAdjust="spacingAndGlyphs">600</text><text transform="translate(289.2,124.9) rotate(-90)" font-family="Liberation Sans" font-size="11.5" fill="#000" textLength="16.7" lengthAdjust="spacingAndGlyphs">800</text><rect x="1071" y="74.5" width="17" height="20" fill="#f0f0f0"/><path d="M1071.5 94 V75 H1087" fill="none" stroke="#fff"/><path d="M1071.5 94.5 H1087.5 V75" fill="none" stroke="#7a7a7a"/><path d="M1075.5 81.5 h3 M1080.5 81.5 h3" stroke="#000" stroke-width="1.4"/><path d="M1075 84.5 h9 l-4.5 4Z" fill="#000"/><rect x="278" y="685" width="19.5" height="16.5" fill="#f0f0f0"/><path d="M278.5 701 V685.5 H297" fill="none" stroke="#fff"/><path d="M278 701.5 H297.5 V685" fill="none" stroke="#7a7a7a"/><path d="M284.5 689 v3 M284.5 694 v3" stroke="#000" stroke-width="1.4"/><path d="M287 688.5 v9 l4.5 -4.5Z" fill="#000"/><defs>
<linearGradient id="hb" x1="0" y1="0" x2="0" y2="1"><stop offset="0" stop-color="#4a3230"/><stop offset="0.12" stop-color="#66461f"/><stop offset="0.3" stop-color="#ae8e40"/><stop offset="0.58" stop-color="#d8ba5e"/><stop offset="0.82" stop-color="#bc9c4c"/><stop offset="1" stop-color="#8a6a34"/></linearGradient>
<linearGradient id="hb2" x1="0" y1="0" x2="0" y2="1"><stop offset="0" stop-color="#a68644"/><stop offset="0.2" stop-color="#d6b85c"/><stop offset="0.58" stop-color="#c2a24c"/><stop offset="0.74" stop-color="#8e6e36"/><stop offset="0.84" stop-color="#604020"/><stop offset="1" stop-color="#745428"/></linearGradient>
<linearGradient id="vb" x1="0" y1="0" x2="1" y2="0"><stop offset="0" stop-color="#6a4a22"/><stop offset="0.3" stop-color="#84623c"/><stop offset="0.55" stop-color="#c4a45c"/><stop offset="0.8" stop-color="#c0a058"/><stop offset="1" stop-color="#705026"/></linearGradient>
<linearGradient id="vb2" x1="0" y1="0" x2="1" y2="0"><stop offset="0" stop-color="#80602a"/><stop offset="0.3" stop-color="#c4a448"/><stop offset="0.6" stop-color="#d8bc5c"/><stop offset="1" stop-color="#80602a"/></linearGradient>
<radialGradient id="ball" cx="0.5" cy="0.45" r="0.56"><stop offset="0" stop-color="#fcf27c"/><stop offset="0.3" stop-color="#f0dc64"/><stop offset="0.62" stop-color="#cfae4c"/><stop offset="0.85" stop-color="#a07c36"/><stop offset="0.96" stop-color="#6a4a22"/><stop offset="1" stop-color="#4a2e14"/></radialGradient>
<linearGradient id="cres" x1="0" y1="0" x2="1" y2="0"><stop offset="0" stop-color="#b6963e"/><stop offset="0.4" stop-color="#c6a94e"/><stop offset="1" stop-color="#c2a44a"/></linearGradient>
<clipPath id="cin"><path clip-rule="evenodd" d="M823 389.5 a68 262 0 1 0 136 0 a68 262 0 1 0 -136 0Z M850.5 388 a43.5 217.2 0 1 0 87 0 a43.5 217.2 0 1 0 -87 0Z"/></clipPath><clipPath id="cc"><rect x="800" y="100" width="94" height="580"/><rect x="894" y="100" width="80" height="90.3"/><rect x="894" y="584.8" width="80" height="90"/></clipPath>
</defs><rect x="757" y="117" width="204.5" height="545.5" fill="#fff"/><rect x="774.3" y="151.4" width="170.8" height="8.6" fill="url(#hb)"/><rect x="774.3" y="167.1" width="170.8" height="8.6" fill="url(#hb)"/><rect x="774.3" y="184.3" width="170.8" height="8.6" fill="url(#hb)"/><rect x="774.3" y="584.7" width="170.8" height="8.7" fill="url(#hb2)"/><rect x="774.3" y="600.8" width="170.8" height="8.7" fill="url(#hb2)"/><rect x="774.3" y="617.6" width="170.8" height="8.7" fill="url(#hb2)"/><rect x="784.2" y="125" width="7.4" height="527.7" fill="url(#vb)"/><rect x="800.1" y="125" width="6.9" height="527.7" fill="url(#vb)"/><rect x="937.6" y="233" width="11.2" height="313.5" fill="url(#vb2)" stroke="#5e4220" stroke-width="0.9"/><rect x="938.2" y="544.3" width="10" height="1.6" fill="#f0e090"/><g clip-path="url(#cc)"><path d="M823 389.5 a68 262 0 1 0 136 0 a68 262 0 1 0 -136 0Z M850.5 388 a43.5 217.2 0 1 0 87 0 a43.5 217.2 0 1 0 -87 0Z" fill="url(#cres)" fill-rule="evenodd"/><g clip-path="url(#cin)"><rect x="823" y="154.9" width="125" height="2" fill="#dcc668" opacity="0.35"/><rect x="823" y="170.6" width="125" height="2" fill="#dcc668" opacity="0.35"/><rect x="823" y="187.8" width="125" height="2" fill="#dcc668" opacity="0.35"/><rect x="823" y="588.2" width="125" height="2" fill="#dcc668" opacity="0.35"/><rect x="823" y="604.3" width="125" height="2" fill="#dcc668" opacity="0.35"/><rect x="823" y="621.1" width="125" height="2" fill="#dcc668" opacity="0.35"/></g><ellipse cx="891" cy="389.5" rx="66" ry="260" fill="none" stroke="#e6d070" stroke-width="1.2" opacity="0.9"/><ellipse cx="891" cy="389.5" rx="67.4" ry="261.4" fill="none" stroke="#54361a" stroke-width="1.5"/><ellipse cx="894" cy="388" rx="45.2" ry="218.9" fill="none" stroke="#f2e472" stroke-width="2.4"/><ellipse cx="894" cy="388" rx="43.6" ry="217.3" fill="none" stroke="#4a3220" stroke-width="1.2"/></g><path d="M909 188.2 H933.5" stroke="#f2e670" stroke-width="3.2"/><path d="M908.5 585 H936" stroke="#5a3a1c" stroke-width="1.4"/><path d="M909 586.7 H935" stroke="#e8d878" stroke-width="1.6"/><circle cx="894.6" cy="265" r="12.9" fill="url(#ball)"/><circle cx="894.6" cy="265" r="12.5" fill="none" stroke="#452a12" stroke-width="1"/><circle cx="894.6" cy="322.7" r="20.8" fill="url(#ball)"/><circle cx="894.6" cy="322.7" r="20.400000000000002" fill="none" stroke="#452a12" stroke-width="1"/><circle cx="894.6" cy="389.5" r="26" fill="url(#ball)"/><circle cx="894.6" cy="389.5" r="25.6" fill="none" stroke="#452a12" stroke-width="1"/><circle cx="894.6" cy="455" r="21" fill="url(#ball)"/><circle cx="894.6" cy="455" r="20.6" fill="none" stroke="#452a12" stroke-width="1"/><circle cx="894.6" cy="513" r="13.6" fill="url(#ball)"/><circle cx="894.6" cy="513" r="13.2" fill="none" stroke="#452a12" stroke-width="1"/><path d="M774.3 151.8 H945.1 M774.3 167.5 H945.1 M774.3 184.70000000000002 H945.1 M774.3 591 H945.1 M774.3 607.0999999999999 H945.1 M774.3 623.9 H945.1 " stroke="#16167a" stroke-width="1"/><path d="M786.9 125 V652.7 M803.2 125 V652.7" stroke="#2a2a90" stroke-width="0.8" opacity="0.9"/><rect x="757" y="117" width="204.5" height="545.5" fill="none" stroke="#000" stroke-width="1"/><path d="M756.5 117 H962" stroke="#000" stroke-width="2"/><path d="M708 390.5 H1009" stroke="#000" stroke-width="1"/><rect x="1072.3" y="112.5" width="14.5" height="556" fill="#cdcdcd"/><path d="M1076 106.5 L1079.5 103 L1083 106.5" fill="none" stroke="#505050" stroke-width="1.8"/><path d="M1076 673.5 L1079.5 677 L1083 673.5" fill="none" stroke="#505050" stroke-width="1.8"/><rect x="315" y="686.3" width="738" height="14.5" fill="#cdcdcd"/><path d="M309 690 L305 693.5 L309 697" fill="none" stroke="#505050" stroke-width="1.8"/><path d="M1060 690 L1064 693.5 L1060 697" fill="none" stroke="#505050" stroke-width="1.8"/><path d="M277.5 747 V706.5 H1089" fill="none" stroke="#9a9a9a"/><rect x="298" y="723" width="25.5" height="20" fill="#000"/><rect x="283.5" y="711.5" width="24.5" height="19.5" fill="#fff" stroke="#000"/><path d="M284 731.5 H308.5 V712" fill="none" stroke="#888"/><rect x="311.5" y="712.5" width="7" height="5" rx="2.5" fill="none" stroke="#000" stroke-width="1.1"/><rect x="315" y="715.5" width="7.5" height="5" rx="2.5" fill="#f0f0f0" stroke="#000" stroke-width="1.1"/></svg>
</div>
<!-- RIGHT -->
<div class="a" id="right" style="left:1093px;top:43px;width:273px;height:705px;background:#f0f0f0;overflow:hidden">
<div class="a" style="left:0;top:0;width:1px;height:705px;background:#a0a0a0"></div><div class="a" style="left:0;top:0;width:273px;height:1px;background:#dcdcdc"></div><div class="a" style="left:272px;top:0;width:1px;height:705px;background:#6a6a6a"></div><div class="bh" style="left:9px;top:2px"><b>Vectors</b><div class="cbtn" style="left:224.5px;top:1px;width:13px;height:13px"><i></i></div></div><div class="bh" style="left:9px;top:129px"><b>Bitmaps</b><div class="cbtn" style="left:224.5px;top:1px;width:13px;height:13px"><i></i></div></div><div class="bh" style="left:9px;top:210px"><b>Reliefs</b><div class="cbtn" style="left:224.5px;top:1px;width:13px;height:13px"><i></i></div></div><div class="dd" style="left:10px;top:18.5px"><span class="t" style="left:1px;top:1px;font-size:12.5px">Default Sheet</span><div class="ddb"><i></i></div></div><div class="dd" style="left:10px;top:226.5px"><span class="t" style="left:1px;top:1px;font-size:12.5px">Front Relief</span><div class="ddb"><i></i></div></div><div class="row" style="left:9px;top:69px;height:25.5px"></div><div class="row" style="left:9px;top:170px;height:24px"></div><div class="row" style="left:9px;top:277.5px;height:25.5px"></div><div class="t" style="left:35.5px;top:76.7px;font-size:12px">Default Layer</div><div class="t" style="left:35.5px;top:176.7px;font-size:12px">Bitmap Layer 1</div><div class="t" style="left:56.3px;top:284.7px;font-size:12px">Relief Layer 1</div><svg class="a" style="left:0;top:0" width="273" height="705" viewBox="1093 43 273 705"><path d="M1113 102.3 l4 1.5 -3 3 h-5Z" fill="#b8b8b8" filter="url(#b1)"/><path d="M1104 91.3 h4.5 l5 6 v9 h-9.5Z" fill="url(#gDoc)"/><path d="M1108.5 91.3 v6 h5Z" fill="#e8eef8"/><path d="M1106.5 93.3 v12" stroke="#dce6f2" stroke-width="1.2" opacity="0.7"/><path d="M1144.8 102.8 l10.5 -3 -2 3.5Z" fill="#b8b8b8" filter="url(#b1)"/><path d="M1140.3 95.3 l2 -3 h8.5 l0.5 3.5 l3.5 1.5 l-3 5 l-10 1.5 l-2 -3.5Z" fill="#f8ea24"/><path d="M1141.8 103.8 q-0.5 -4 4 -4.5 l9 -1 -3 4.5Z" fill="#d8c418"/><path d="M1188 100.9 l3.5 -1 -2 4Z" fill="#b8b8b8"/><rect x="1177" y="92.9" width="12" height="11.7" rx="0.8" fill="#1c50b0"/><rect x="1179.2" y="93.4" width="7.6" height="5.5" fill="#e4e8f0"/><path d="M1180.5 93.4 v4.5 M1182.5 93.4 v4.5 M1184.5 93.4 v4.5" stroke="#a8b0c0" stroke-width="0.7"/><rect x="1180" y="100.9" width="6" height="3.7" fill="#c8d0dc"/><rect x="1181" y="101.7" width="1.8" height="2.5" fill="#1c50b0"/><path d="M1222.5 104 l6 -2 -2 4 h-6Z" fill="#b8b8b8" filter="url(#b1)"/><path d="M1213 91 h8 v4 h3 l3 10.5 h-11 l-1 -3 h-2Z" fill="#c8a478"/><path d="M1216 95.5 h7.5 l2.5 9.5 h-9Z" fill="#d4b088"/><path d="M1213.5 92 v10" stroke="#a88858" stroke-width="1" stroke-dasharray="1 1"/><path d="M1252 91.5 h7 l4 3 v12 h-11Z" fill="#8090ac"/><path d="M1252 91.5 h4 v15 h-4Z" fill="#a0b0c8" opacity="0.7"/><path d="M1259 90.5 q3 0 3.5 3" stroke="#b0b0b0" stroke-width="1" fill="none"/><g transform="translate(1257.5,93) scale(0.85)"><path d="M0 0 C6.5 0 6.5 7 2.8 9.5 L2.3 11.5 H-2.3 L-2.8 9.5 C-6.5 7 -6.5 0 0 0Z" fill="#f4c820"/><ellipse cx="-0.8" cy="3.8" rx="2.6" ry="3" fill="#fff8a0"/><path d="M2.5 2 Q4.8 5 2.5 9" stroke="#d89810" stroke-width="1.2" fill="none"/><rect x="-2.1" y="11.5" width="4.2" height="2.8" fill="#2a1408"/><rect x="-2.1" y="11" width="4.2" height="1" fill="#b04818" opacity="0.8"/></g><path d="M1290 94.8 h10 l-1 8.5 q-4 1.5 -8 0Z" fill="#5080e0"/><path d="M1291 96.8 l0.8 6.5 q1.5 0.5 2.5 0.6 v-7Z" fill="#80a8f0"/><ellipse cx="1295" cy="94.8" rx="5" ry="1.9" fill="#a8c8f8" stroke="#4070d0" stroke-width="0.8"/><path d="M1293 94.8 q2 -1.5 4.5 0" stroke="#e8f0ff" stroke-width="1" fill="none"/><rect x="1323.3" y="90.3" width="17" height="17" fill="#f0e8d8"/><path d="M1323.8 107.3 V90.8 H1340.3" fill="none" stroke="#c89048" stroke-width="1.2"/><g transform="translate(1329.1,92.8) scale(0.9)"><path d="M0 0 C6.5 0 6.5 7 2.8 9.5 L2.3 11.5 H-2.3 L-2.8 9.5 C-6.5 7 -6.5 0 0 0Z" fill="#f4c820"/><ellipse cx="-0.8" cy="3.8" rx="2.6" ry="3" fill="#fff8a0"/><path d="M2.5 2 Q4.8 5 2.5 9" stroke="#d89810" stroke-width="1.2" fill="none"/><rect x="-2.1" y="11.5" width="4.2" height="2.8" fill="#2a1408"/><rect x="-2.1" y="11" width="4.2" height="1" fill="#b04818" opacity="0.8"/></g><g transform="translate(1335.1,91.1) scale(0.9)"><path d="M0 0 C6.5 0 6.5 7 2.8 9.5 L2.3 11.5 H-2.3 L-2.8 9.5 C-6.5 7 -6.5 0 0 0Z" fill="#f4c820"/><ellipse cx="-0.8" cy="3.8" rx="2.6" ry="3" fill="#fff8a0"/><path d="M2.5 2 Q4.8 5 2.5 9" stroke="#d89810" stroke-width="1.2" fill="none"/><rect x="-2.1" y="11.5" width="4.2" height="2.8" fill="#2a1408"/><rect x="-2.1" y="11" width="4.2" height="1" fill="#b04818" opacity="0.8"/></g><rect x="1106" y="117" width="17" height="16.5" fill="#e8e8e8"/><path d="M1106.5 133 V117.5 H1122.5" fill="none" stroke="#fff"/><path d="M1106.5 133.5 H1123 V117.5" fill="none" stroke="#a0a0a0"/><circle cx="1114.5" cy="125.5" r="6.5" fill="#000"/><rect x="1287.5" y="116.5" width="16.5" height="16.5" fill="#c8c8c8"/><path d="M1288 133 V117 H1304" fill="none" stroke="#f4f4f4"/><path d="M1288 133 H1304 V117" fill="none" stroke="#8a8a8a"/><path d="M1292.5 132 V124 Q1292.5 119 1296.5 119 Q1300.5 119 1300.5 124 V132Z" fill="#9c9c9c"/><circle cx="1296.8" cy="122.5" r="2" fill="#e0e0e0"/><path d="M1296.5 131.5 V127 M1294.5 128.5 l2 -2 2 2" stroke="#000" stroke-width="1.4" fill="none"/><rect x="1304.8" y="116.5" width="17.5" height="16.5" fill="#dcdcdc"/><path d="M1307.5 117 V134 M1305 131.5 H1322" stroke="#000" stroke-width="1.2" stroke-dasharray="2.5 1.2"/><path d="M1320.5 119 L1313 126.5" stroke="#000" stroke-width="2.4"/><path d="M1310.5 129 L1312 123.5 L1316 127.5Z" fill="#000"/><rect x="1323.5" y="116.5" width="17" height="16.5" fill="#d0d0d0"/><path d="M1324 133 V117 H1340.5" fill="none" stroke="#b0b0b0"/><path d="M1324 133.5 H1340.5 V117" fill="none" stroke="#f8f8f8"/><g transform="translate(1332,118.5) scale(0.92)"><path d="M0 0 C6.5 0 6.5 7 2.8 9.5 L2.3 11.5 H-2.3 L-2.8 9.5 C-6.5 7 -6.5 0 0 0Z" fill="#f4c820"/><ellipse cx="-0.8" cy="3.8" rx="2.6" ry="3" fill="#fff8a0"/><path d="M2.5 2 Q4.8 5 2.5 9" stroke="#d89810" stroke-width="1.2" fill="none"/><rect x="-2.1" y="11.5" width="4.2" height="2.8" fill="#2a1408"/><rect x="-2.1" y="11" width="4.2" height="1" fill="#b04818" opacity="0.8"/></g><rect x="1312" y="141.2" width="12" height="12" rx="1.5" fill="#173c8c"/><rect x="1312.5" y="141.7" width="11" height="5" rx="1.5" fill="#2a52a8" opacity="0.7"/><path d="M1318 151.2 V144.2 M1314.5 147.39999999999998 L1318 143.89999999999998 L1321.5 147.39999999999998" fill="none" stroke="#fff" stroke-width="1.8"/><rect x="1330" y="141.2" width="12" height="12" rx="1.5" fill="#173c8c"/><rect x="1330.5" y="141.7" width="11" height="5" rx="1.5" fill="#2a52a8" opacity="0.7"/><path d="M1336 143.2 V150.2 M1332.5 147 L1336 150.5 L1339.5 147" fill="none" stroke="#fff" stroke-width="1.8"/><path d="M1113 203.3 l4 1.5 -3 3 h-5Z" fill="#b8b8b8" filter="url(#b1)"/><path d="M1104 192.3 h4.5 l5 6 v9 h-9.5Z" fill="url(#gDoc)"/><path d="M1108.5 192.3 v6 h5Z" fill="#e8eef8"/><path d="M1106.5 194.3 v12" stroke="#dce6f2" stroke-width="1.2" opacity="0.7"/><path d="M1138.7 204 l10.5 -3 -2 3.5Z" fill="#b8b8b8" filter="url(#b1)"/><path d="M1134.2 196.5 l2 -3 h8.5 l0.5 3.5 l3.5 1.5 l-3 5 l-10 1.5 l-2 -3.5Z" fill="#f8ea24"/><path d="M1135.7 205 q-0.5 -4 4 -4.5 l9 -1 -3 4.5Z" fill="#d8c418"/><path d="M1177 201.8 l3.5 -1 -2 4Z" fill="#b8b8b8"/><rect x="1166" y="193.8" width="12" height="11.7" rx="0.8" fill="#1c50b0"/><rect x="1168.2" y="194.3" width="7.6" height="5.5" fill="#e4e8f0"/><path d="M1169.5 194.3 v4.5 M1171.5 194.3 v4.5 M1173.5 194.3 v4.5" stroke="#a8b0c0" stroke-width="0.7"/><rect x="1169" y="201.8" width="6" height="3.7" fill="#c8d0dc"/><rect x="1170" y="202.60000000000002" width="1.8" height="2.5" fill="#1c50b0"/><path d="M1207.5 205 l6 -2 -2 4 h-6Z" fill="#b8b8b8" filter="url(#b1)"/><path d="M1198 192 h8 v4 h3 l3 10.5 h-11 l-1 -3 h-2Z" fill="#c8a478"/><path d="M1201 196.5 h7.5 l2.5 9.5 h-9Z" fill="#d4b088"/><path d="M1198.5 193 v10" stroke="#a88858" stroke-width="1" stroke-dasharray="1 1"/><defs><linearGradient id="gsq" x1="0" y1="0" x2="0" y2="1"><stop offset="0" stop-color="#9a9a9a"/><stop offset="1" stop-color="#f0f0f0"/></linearGradient></defs><path d="M1242 203 l3 -3 -1 6 -2 1Z" fill="#b0b0b0"/><rect x="1230" y="192.5" width="12" height="14" fill="url(#gsq)"/><path d="M1264 207 V197 h10 l3 8 v2Z" fill="#8c98dc"/><g transform="translate(1261,192.8) scale(0.4523809523809524,0.44)"><rect x="0" y="0" width="21" height="25" fill="#54502c"/>
<path d="M0 0 h21 v13 q-5 -4 -10 -2 q-6 -3 -11 1Z" fill="#c4c490"/><path d="M13 0 h8 v9 q-4 -2 -8 -1Z" fill="#e0dcb4"/>
<path d="M3.5 25 Q3 10 6.5 5 Q10 1.5 14 5 Q17 11 18 25Z" fill="#1c140c"/><ellipse cx="10" cy="9" rx="3.6" ry="4.6" fill="#e6b874"/>
<path d="M8 8 h1.6 M11 8 h1.6 M9 11.5 h2.2" stroke="#6a4420" stroke-width="0.8"/>
<path d="M5.5 25 Q6 17 10 15 Q14 16.5 15 25Z" fill="#cc9a4c"/></g><path d="M1295 195.5 h10 l-1 8.5 q-4 1.5 -8 0Z" fill="#5080e0"/><path d="M1296 197.5 l0.8 6.5 q1.5 0.5 2.5 0.6 v-7Z" fill="#80a8f0"/><ellipse cx="1300" cy="195.5" rx="5" ry="1.9" fill="#a8c8f8" stroke="#4070d0" stroke-width="0.8"/><path d="M1298 195.5 q2 -1.5 4.5 0" stroke="#e8f0ff" stroke-width="1" fill="none"/><rect x="1323.8" y="191" width="17" height="17" fill="#f4f4f4"/><path d="M1324.3 208 H1340.8 V191" fill="none" stroke="#6a6a6a"/><path d="M1323.8 191.5 H1340.3 M1324.3 191 V207.5" stroke="#fff"/><g transform="translate(1329.6,193.5) scale(0.9)"><path d="M0 0 C6.5 0 6.5 7 2.8 9.5 L2.3 11.5 H-2.3 L-2.8 9.5 C-6.5 7 -6.5 0 0 0Z" fill="#b0b0b0"/><ellipse cx="-0.8" cy="3.8" rx="2.6" ry="3" fill="#e8e8e8"/><path d="M2.5 2 Q4.8 5 2.5 9" stroke="#909090" stroke-width="1.2" fill="none"/><rect x="-2.1" y="11.5" width="4.2" height="2.8" fill="#1a1a1a"/><rect x="-2.1" y="11" width="4.2" height="1" fill="#b04818" opacity="0"/></g><g transform="translate(1335.6,191.8) scale(0.9)"><path d="M0 0 C6.5 0 6.5 7 2.8 9.5 L2.3 11.5 H-2.3 L-2.8 9.5 C-6.5 7 -6.5 0 0 0Z" fill="#b0b0b0"/><ellipse cx="-0.8" cy="3.8" rx="2.6" ry="3" fill="#e8e8e8"/><path d="M2.5 2 Q4.8 5 2.5 9" stroke="#909090" stroke-width="1.2" fill="none"/><rect x="-2.1" y="11.5" width="4.2" height="2.8" fill="#1a1a1a"/><rect x="-2.1" y="11" width="4.2" height="1" fill="#b04818" opacity="0"/></g><g transform="translate(1106,216.4) scale(0.7619047619047619,0.664)"><rect x="0" y="0" width="21" height="25" fill="#54502c"/>
<path d="M0 0 h21 v13 q-5 -4 -10 -2 q-6 -3 -11 1Z" fill="#c4c490"/><path d="M13 0 h8 v9 q-4 -2 -8 -1Z" fill="#e0dcb4"/>
<path d="M3.5 25 Q3 10 6.5 5 Q10 1.5 14 5 Q17 11 18 25Z" fill="#1c140c"/><ellipse cx="10" cy="9" rx="3.6" ry="4.6" fill="#e6b874"/>
<path d="M8 8 h1.6 M11 8 h1.6 M9 11.5 h2.2" stroke="#6a4420" stroke-width="0.8"/>
<path d="M5.5 25 Q6 17 10 15 Q14 16.5 15 25Z" fill="#cc9a4c"/></g><path d="M1113 310.3 l4 1.5 -3 3 h-5Z" fill="#b8b8b8" filter="url(#b1)"/><path d="M1104 299.3 h4.5 l5 6 v9 h-9.5Z" fill="url(#gDoc)"/><path d="M1108.5 299.3 v6 h5Z" fill="#e8eef8"/><path d="M1106.5 301.3 v12" stroke="#dce6f2" stroke-width="1.2" opacity="0.7"/><path d="M1135 310.5 l10.5 -3 -2 3.5Z" fill="#b8b8b8" filter="url(#b1)"/><path d="M1130.5 303 l2 -3 h8.5 l0.5 3.5 l3.5 1.5 l-3 5 l-10 1.5 l-2 -3.5Z" fill="#f8ea24"/><path d="M1132 311.5 q-0.5 -4 4 -4.5 l9 -1 -3 4.5Z" fill="#d8c418"/><path d="M1169 308.5 l3.5 -1 -2 4Z" fill="#b8b8b8"/><rect x="1158" y="300.5" width="12" height="11.7" rx="0.8" fill="#1c50b0"/><rect x="1160.2" y="301" width="7.6" height="5.5" fill="#e4e8f0"/><path d="M1161.5 301 v4.5 M1163.5 301 v4.5 M1165.5 301 v4.5" stroke="#a8b0c0" stroke-width="0.7"/><rect x="1161" y="308.5" width="6" height="3.7" fill="#c8d0dc"/><rect x="1162" y="309.3" width="1.8" height="2.5" fill="#1c50b0"/><path d="M1196 311.8 l6 -2 -2 4 h-6Z" fill="#b8b8b8" filter="url(#b1)"/><path d="M1186.5 298.8 h8 v4 h3 l3 10.5 h-11 l-1 -3 h-2Z" fill="#c8a478"/><path d="M1189.5 303.3 h7.5 l2.5 9.5 h-9Z" fill="#d4b088"/><path d="M1187 299.8 v10" stroke="#a88858" stroke-width="1" stroke-dasharray="1 1"/><path d="M1213 309.5 l8 -4 8 4 -8 5Z" fill="#a81810"/><path d="M1218 309.5 h6 l-3 3.5Z" fill="#f0c040"/><path d="M1213 303 l8 -4.2 8 4.2 -8 4.5Z" fill="#8090e8"/><path d="M1213 303 l8 -4.2 8 4.2" stroke="#a8b4f4" stroke-width="0.8" fill="none"/><path d="M1243 299.5 h7 l4 3 v12 h-11Z" fill="#8090ac"/><path d="M1243 299.5 h4 v15 h-4Z" fill="#a0b0c8" opacity="0.7"/><path d="M1250 298.5 q3 0 3.5 3" stroke="#b0b0b0" stroke-width="1" fill="none"/><g transform="translate(1248.5,301) scale(0.85)"><path d="M0 0 C6.5 0 6.5 7 2.8 9.5 L2.3 11.5 H-2.3 L-2.8 9.5 C-6.5 7 -6.5 0 0 0Z" fill="#f4c820"/><ellipse cx="-0.8" cy="3.8" rx="2.6" ry="3" fill="#fff8a0"/><path d="M2.5 2 Q4.8 5 2.5 9" stroke="#d89810" stroke-width="1.2" fill="none"/><rect x="-2.1" y="11.5" width="4.2" height="2.8" fill="#2a1408"/><rect x="-2.1" y="11" width="4.2" height="1" fill="#b04818" opacity="0.8"/></g><rect x="1270" y="300" width="14.2" height="14" fill="#000"/><g transform="translate(1276.6,307.5) scale(0.54)">
<circle cx="-4" cy="-9" r="2.2" fill="#d0d0d0"/><circle cx="4" cy="-9" r="2.2" fill="#d0d0d0"/>
<circle cx="0" cy="-6" r="4.6" fill="#d0d0d0"/>
<path d="M-5 -2 Q-10 4 -8.5 9 L8.5 9 Q10 4 5 -2Z" fill="#d0d0d0"/>
<ellipse cx="0" cy="4.5" rx="4.5" ry="4.8" fill="#808080"/>
<circle cx="-5.5" cy="9.5" r="2.2" fill="#d0d0d0"/><circle cx="5.5" cy="9.5" r="2.2" fill="#d0d0d0"/>
<ellipse cx="0" cy="-5" rx="2" ry="1.6" fill="#808080"/></g><path d="M1280.7 303.5 h2 M1281.7 303.5 v2" stroke="#fff" stroke-width="0.9"/><path d="M1298.8 302.5 h10 l-1 8.5 q-4 1.5 -8 0Z" fill="#5080e0"/><path d="M1299.8 304.5 l0.8 6.5 q1.5 0.5 2.5 0.6 v-7Z" fill="#80a8f0"/><ellipse cx="1303.8" cy="302.5" rx="5" ry="1.9" fill="#a8c8f8" stroke="#4070d0" stroke-width="0.8"/><path d="M1301.8 302.5 q2 -1.5 4.5 0" stroke="#e8f0ff" stroke-width="1" fill="none"/><rect x="1323.3" y="298.3" width="17" height="17" fill="#f0e8d8"/><path d="M1323.8 315.3 V298.8 H1340.3" fill="none" stroke="#c89048" stroke-width="1.2"/><g transform="translate(1329.1,300.8) scale(0.9)"><path d="M0 0 C6.5 0 6.5 7 2.8 9.5 L2.3 11.5 H-2.3 L-2.8 9.5 C-6.5 7 -6.5 0 0 0Z" fill="#f4c820"/><ellipse cx="-0.8" cy="3.8" rx="2.6" ry="3" fill="#fff8a0"/><path d="M2.5 2 Q4.8 5 2.5 9" stroke="#d89810" stroke-width="1.2" fill="none"/><rect x="-2.1" y="11.5" width="4.2" height="2.8" fill="#2a1408"/><rect x="-2.1" y="11" width="4.2" height="1" fill="#b04818" opacity="0.8"/></g><g transform="translate(1335.1,299.1) scale(0.9)"><path d="M0 0 C6.5 0 6.5 7 2.8 9.5 L2.3 11.5 H-2.3 L-2.8 9.5 C-6.5 7 -6.5 0 0 0Z" fill="#f4c820"/><ellipse cx="-0.8" cy="3.8" rx="2.6" ry="3" fill="#fff8a0"/><path d="M2.5 2 Q4.8 5 2.5 9" stroke="#d89810" stroke-width="1.2" fill="none"/><rect x="-2.1" y="11.5" width="4.2" height="2.8" fill="#2a1408"/><rect x="-2.1" y="11" width="4.2" height="1" fill="#b04818" opacity="0.8"/></g><path d="M1112.5 331 Q1114 324 1121 324 Q1129 325 1131.5 333 L1127 336.5 Q1124 329.5 1118 329.5 Q1115 330 1114 332Z" fill="#c8a850"/><path d="M1113 331.5 Q1115 325.5 1121.5 325" stroke="#f0e0a0" stroke-width="1" fill="none"/><path d="M1113.5 333 Q1115 329.5 1119 329.8 Q1124 331 1126 336.5 Q1118 338 1113.5 333Z" fill="#8088d0"/><path d="M1112 339.5 h7 M1115.5 336 v7" stroke="#000" stroke-width="1.3"/><path d="M1139 330 l4.5 3.5 -4.5 3.5Z" fill="#000"/><rect x="1323.5" y="324" width="17" height="17.5" fill="#d4d4d4"/><path d="M1324 341 V324.5 H1340.5" fill="none" stroke="#b0b0b0"/><path d="M1324 341.5 H1340.5 V324.5" fill="none" stroke="#f8f8f8"/><g transform="translate(1332,326) scale(0.95)"><path d="M0 0 C6.5 0 6.5 7 2.8 9.5 L2.3 11.5 H-2.3 L-2.8 9.5 C-6.5 7 -6.5 0 0 0Z" fill="#f4c820"/><ellipse cx="-0.8" cy="3.8" rx="2.6" ry="3" fill="#fff8a0"/><path d="M2.5 2 Q4.8 5 2.5 9" stroke="#d89810" stroke-width="1.2" fill="none"/><rect x="-2.1" y="11.5" width="4.2" height="2.8" fill="#2a1408"/><rect x="-2.1" y="11" width="4.2" height="1" fill="#b04818" opacity="0.8"/></g><rect x="1312" y="349.2" width="12" height="12" rx="1.5" fill="#173c8c"/><rect x="1312.5" y="349.7" width="11" height="5" rx="1.5" fill="#2a52a8" opacity="0.7"/><path d="M1318 359.2 V352.2 M1314.5 355.4 L1318 351.9 L1321.5 355.4" fill="none" stroke="#fff" stroke-width="1.8"/><rect x="1330" y="349.2" width="12" height="12" rx="1.5" fill="#173c8c"/><rect x="1330.5" y="349.7" width="11" height="5" rx="1.5" fill="#2a52a8" opacity="0.7"/><path d="M1336 351.2 V358.2 M1332.5 355 L1336 358.5 L1339.5 355" fill="none" stroke="#fff" stroke-width="1.8"/></svg>
</div>
<div class="a tex" style="left:0;top:721px;width:270px;height:26px"></div><div class="a tex" style="left:1094px;top:721px;width:272px;height:26px"></div><svg class="a" style="left:0;top:715px" width="1366" height="53" viewBox="0 715 1366 53"><defs><filter id="nz" x="0" y="0" width="100%" height="100%"><feTurbulence type="fractalNoise" baseFrequency="0.14 0.55" numOctaves="2" seed="3"/><feColorMatrix type="matrix" values="0 0 0 0 0.96  0 0 0 0 0.96  0 0 0 0 0.96  1.6 1.6 0 0 -1.25"/></filter></defs><clipPath id="ts1"><rect x="0" y="722" width="270.5" height="25"/></clipPath><clipPath id="ts2"><rect x="1094" y="722" width="272" height="25"/></clipPath><rect x="0" y="722" width="270.5" height="25" fill="#d3d3d3"/><g clip-path="url(#ts1)"><rect x="-40" y="600" width="420" height="260" filter="url(#nz)" opacity="0.8" transform="rotate(-62 135 734)"/></g><rect x="1094" y="722" width="272" height="25" fill="#d3d3d3"/><g clip-path="url(#ts2)"><rect x="1020" y="600" width="420" height="260" filter="url(#nz)" opacity="0.8" transform="rotate(-62 1230 734)"/></g><path d="M0 721.5 H51.5 M112.5 721.5 H270.5" stroke="#8a8a8a"/><path d="M0 747.5 H276.5" stroke="#a8a8a8"/><path d="M1 722 V741 Q1 745 5 745 H46 Q50.5 745 50.5 740 V722Z" fill="#f2f2f2"/><path d="M1.5 741 Q1.5 745 5 745 H46 Q50.5 745 50.5 740" fill="none" stroke="#b0b0b0"/><path d="M113.5 722 V741 Q113.5 745 118 745 H174 Q179 745 179 740 V722Z" fill="#f2f2f2"/><path d="M113.5 722 V741 Q113.5 745 118 745 H174 Q179 745 179 740 V722" fill="none" stroke="#b0b0b0"/><path d="M51 720 V742 Q51 746.5 56 746.5 H107 Q112.5 746.5 112.5 741 V720Z" fill="#f4f4f4"/><path d="M51.5 721 V742 Q51.5 746.5 56 746.5 H107 Q112.5 746.5 112.5 741 V721" fill="none" stroke="#b8b8b8"/><path d="M112.5 721 V741 Q112.5 746.5 107 746.5 H58" fill="none" stroke="#9a9a9a"/><path d="M1143.5 721.5 H1366" stroke="#8a8a8a"/><path d="M1093.5 747.5 H1366" stroke="#a8a8a8"/><path d="M1144 722 V741 Q1144 745.5 1148 745.5 H1186 Q1191.5 745.5 1191.5 740 V722Z" fill="#f2f2f2"/><path d="M1144 745.5 H1186 Q1191.5 745.5 1191.5 740 V722" fill="none" stroke="#b0b0b0"/><path d="M1094 720 V742 Q1094 746.5 1099 746.5 H1138 Q1143.5 746.5 1143.5 741 V720Z" fill="#f4f4f4"/><path d="M1143.5 721 V741 Q1143.5 746.5 1138 746.5 H1099" fill="none" stroke="#9a9a9a"/><path d="M1023.5 768 V751.5 H1088.5" fill="none" stroke="#a8a8a8"/><path d="M1088.5 752 V768" stroke="#fff"/><path d="M1092.5 768 V751.5 H1158" fill="none" stroke="#a8a8a8"/><path d="M1158 752 V768" stroke="#fff"/><path d="M1161.5 768 V751.5 H1221" fill="none" stroke="#a8a8a8"/><path d="M1221 752 V768" stroke="#fff"/><path d="M1224.5 768 V751.5 H1294" fill="none" stroke="#a8a8a8"/><path d="M1294 752 V768" stroke="#fff"/><path d="M1297.5 768 V751.5 H1367" fill="none" stroke="#a8a8a8"/><path d="M1367 752 V768" stroke="#fff"/></svg><div class="t" style="left:9.5px;top:727.4px;font-size:12.6px;color:#111" id="f13">Project</div><div class="t" style="left:59.3px;top:726.4px;font-size:12.6px;color:#111" id="f14">Assistant</div><div class="t" style="left:122.3px;top:727.4px;font-size:12.6px;color:#111" id="f15">Toolpaths</div><div class="t" style="left:1103.2px;top:726.8000000000001px;font-size:12.6px;color:#111" id="f16">Layers</div><div class="t" style="left:1151.4px;top:727.6px;font-size:12.6px;color:#111" id="f17">Add In</div><div class="t" style="left:1025.5px;top:753.9px;font-size:12.6px;color:#111" id="f18">X: 583.102</div><div class="t" style="left:1094.3px;top:753.9px;font-size:12.6px;color:#111" id="f19">Y: -600.429</div><div class="a" style="left:270px;top:44px;width:1px;height:677px;background:#a0a0a0"></div><div class="a" style="left:0;top:44px;width:1px;height:677px;background:#fafafa"></div>
</div></body></html>
